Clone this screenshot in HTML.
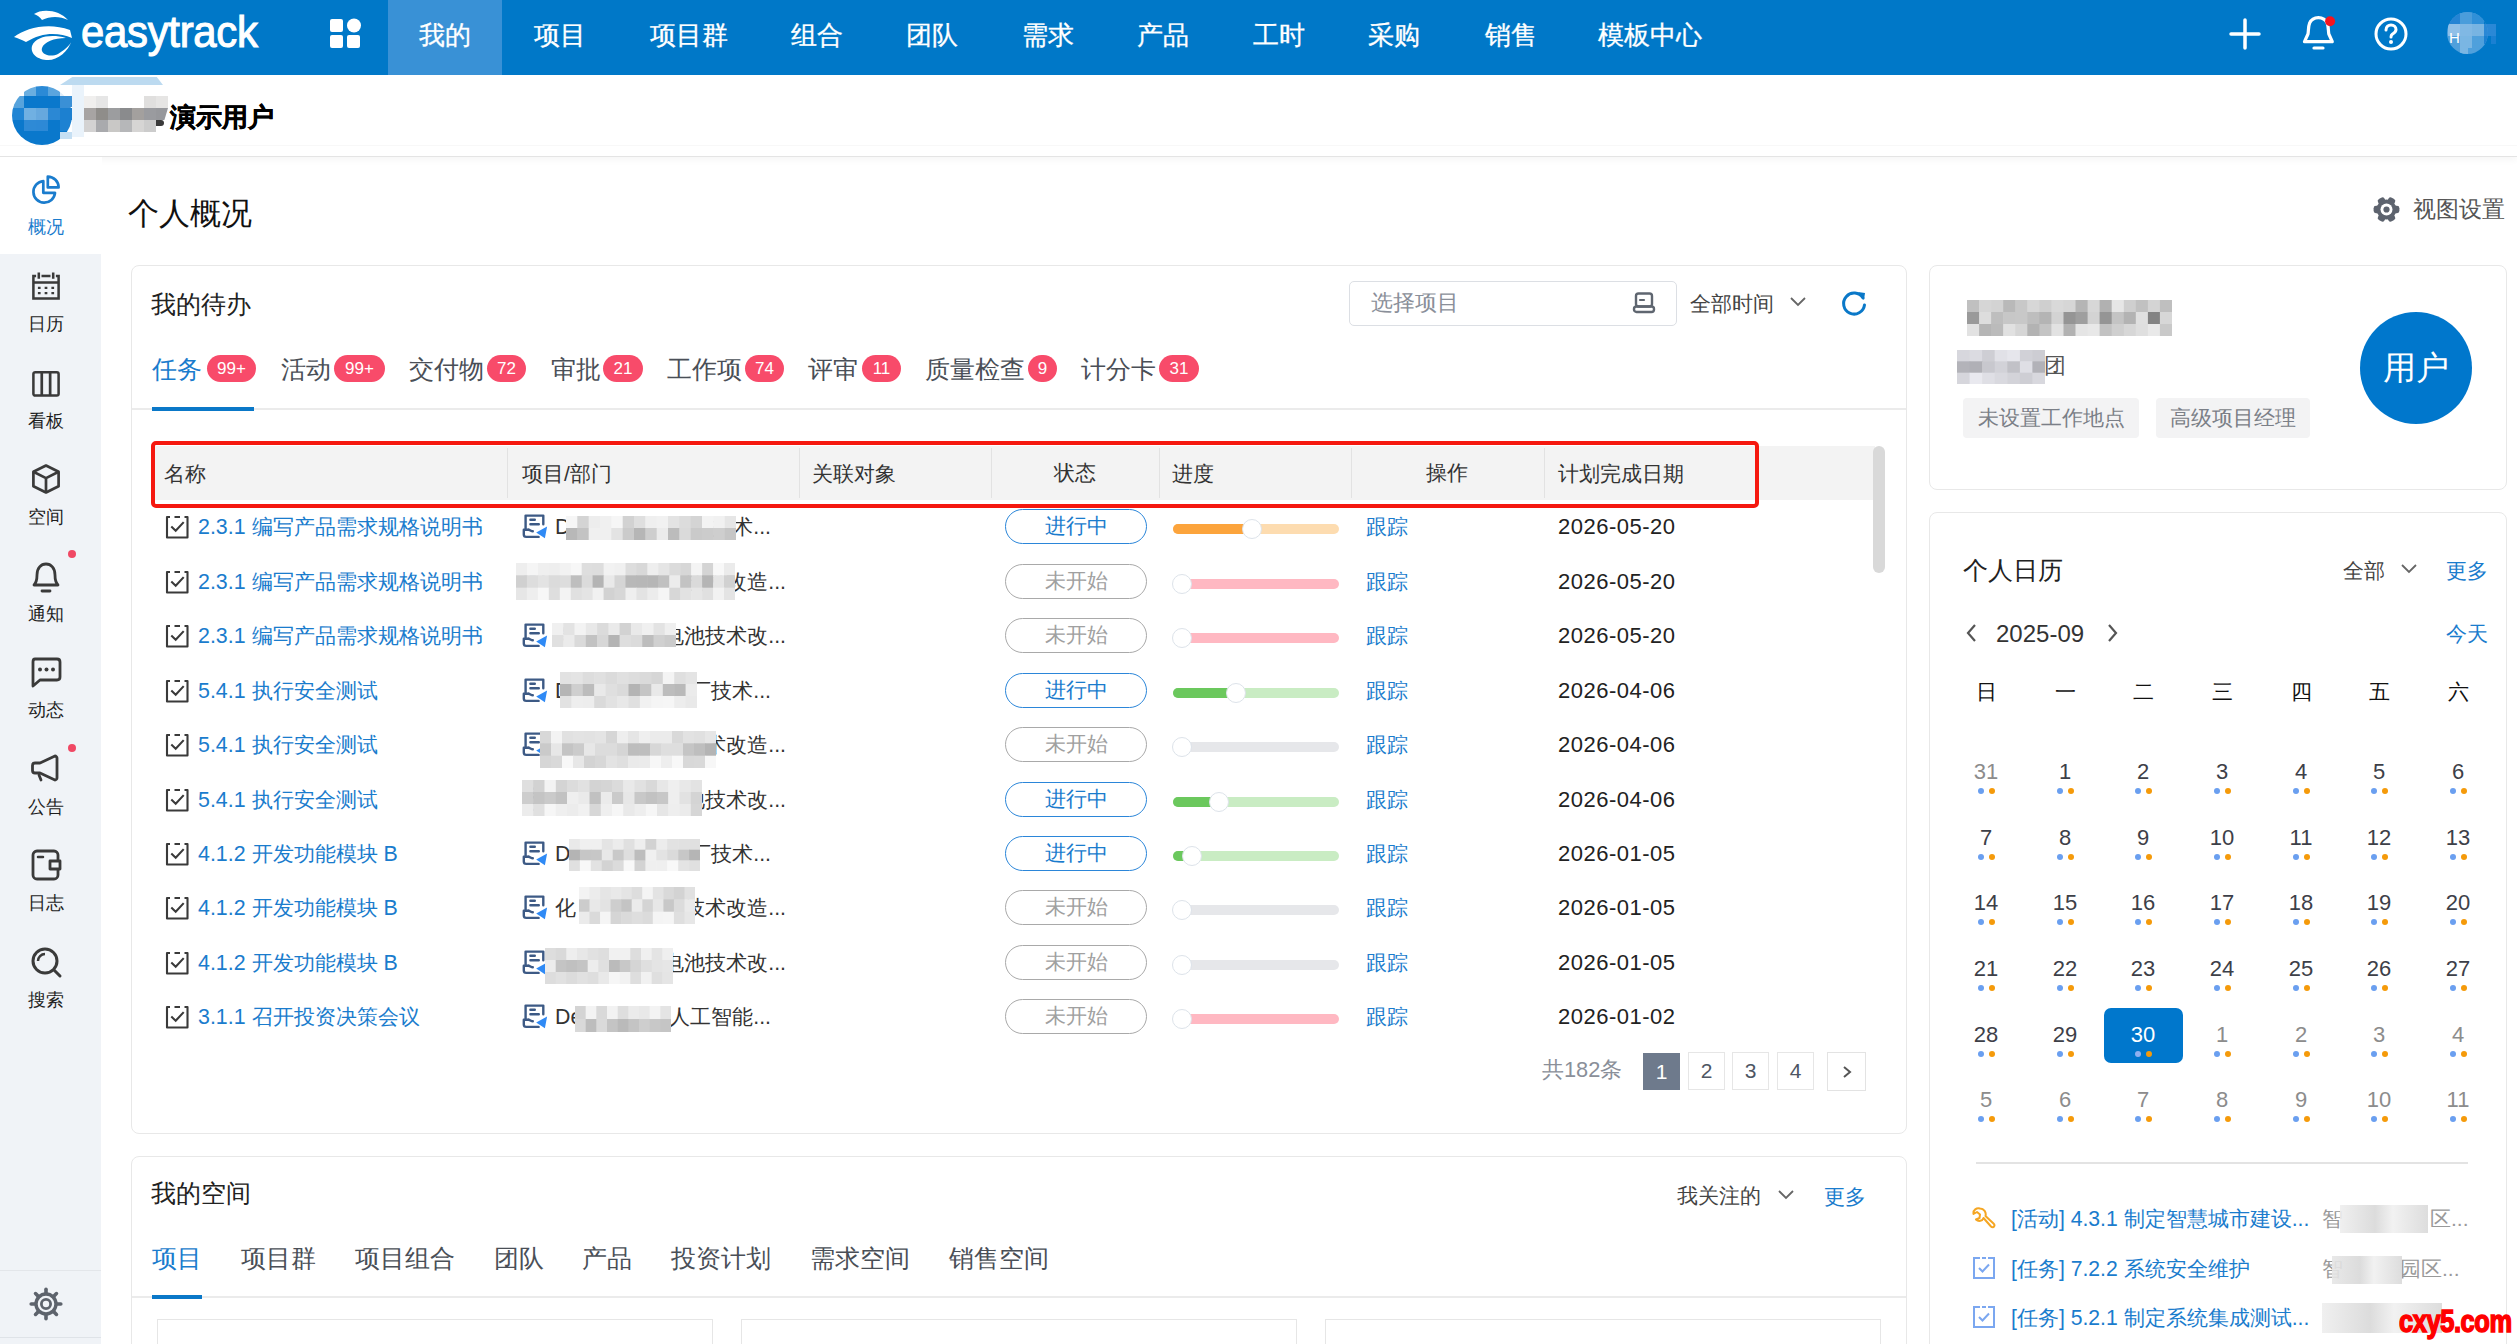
<!DOCTYPE html>
<html><head><meta charset="utf-8">
<style>
*{margin:0;padding:0;box-sizing:border-box}
html,body{width:2517px;height:1344px;overflow:hidden;background:#fff;font-family:"Liberation Sans",sans-serif;color:#333}
.a{position:absolute}
.nav{left:0;top:0;width:2517px;height:75px;background:#0078c8}
.nav .it{position:absolute;top:0;height:75px;line-height:70px;color:#fff;font-size:25.5px;text-align:center;-webkit-text-stroke:0.3px #fff}
.nav .act{background:#3991d6}
.bar2{left:0;top:75px;width:2517px;height:82px;background:linear-gradient(#fff 0,#fff 70px,#f8f8f8 70px,#f8f8f8 71px,#fff 71px,#fff 81px,#e4e4e4 81px,#e4e4e4 82px);box-shadow:0 4px 6px rgba(0,0,0,0.03)}
.side{left:0;top:157px;width:101px;height:1187px;background:#f0f3f7}
.side .s{position:absolute;left:0;width:92px;text-align:center;font-size:18px;color:#333}
.card{position:absolute;border:1px solid #e8e8e8;border-radius:8px;background:#fff}
</style></head><body>
<!-- top nav -->
<div class="a nav">
  
  <svg class="a" style="left:12px;top:8px" width="64" height="52" viewBox="0 0 64 52">
    <path d="M22 6 C30 0 48 2 56 12 C48 8 38 8 30 12 C28 9 25 7 22 6 Z" fill="#fff"/>
    <path d="M2 29 C14 20 36 14 58 22 L60 30 C46 24 30 24 14 34 C10 32 6 30 2 29 Z" fill="#fff"/>
    <path d="M60 32 C56 44 46 52 36 52 C26 52 18 46 20 38 C24 28 40 26 54 30 C42 30 32 34 30 40 C28 46 38 50 46 46 C52 42 58 38 60 32 Z" fill="#fff"/>
  </svg>
  <div class="a" style="left:81px;top:2px;height:60px;line-height:60px;font-size:45px;color:#fff;-webkit-text-stroke:1.1px #fff;letter-spacing:-0.3px;transform:scaleX(0.93);transform-origin:left;font-family:'Liberation Sans',sans-serif">easytrack</div>
  <svg class="a" style="left:330px;top:18px" width="31" height="30" viewBox="0 0 31 30">
    <rect x="0" y="1" width="13" height="13" rx="2" fill="#fff"/>
    <circle cx="24" cy="7.5" r="7" fill="#fff"/>
    <rect x="0" y="17" width="13" height="13" rx="2" fill="#fff"/>
    <rect x="17" y="17" width="13" height="13" rx="2" fill="#fff"/>
  </svg>
  <svg class="a" style="left:2228px;top:17px" width="34" height="34" viewBox="0 0 34 34">
    <path d="M17 3 V31 M3 17 H31" stroke="#fff" stroke-width="3.5" stroke-linecap="round"/>
  </svg>
  <svg class="a" style="left:2300px;top:14px" width="40" height="40" viewBox="0 0 40 40"><path d="M4.5 27.7 L8 20 C8.6 17 8.2 12.5 9.6 9.2 C11.2 5.6 14.6 3.6 18.4 3.6 C22.2 3.6 25.6 5.6 27.2 9.2 C28.6 12.5 28.2 17 28.8 20 L32.3 27.7 Z" stroke="#fff" stroke-width="3.2" fill="none" stroke-linejoin="round"/><path d="M14 34 H23" stroke="#fff" stroke-width="3.2" stroke-linecap="round"/><circle cx="30.1" cy="7.3" r="5" fill="#f5141e"/></svg>
  <svg class="a" style="left:2373px;top:16px" width="36" height="36" viewBox="0 0 36 36">
    <circle cx="18" cy="18" r="15" stroke="#fff" stroke-width="3" fill="none"/>
    <path d="M13 14 C13 10.5 15.5 9 18 9 C21 9 23 11 23 13.5 C23 16 21 17 19.5 18 C18.5 18.7 18 19.5 18 21" stroke="#fff" stroke-width="3" fill="none" stroke-linecap="round"/>
    <circle cx="18" cy="26" r="2" fill="#fff"/>
  </svg>
  <div class="a" style="left:2484px;top:24px;width:12px;height:12px;background:#2a88d6"></div>
  <div class="a" style="left:2491px;top:36px;width:5px;height:8px;background:#1a80d2"></div>
  <div class="a" style="left:2447px;top:12px;width:41px;height:42px;border-radius:50%;background:#4fa0dc;overflow:hidden">
    <div class="a" style="left:0;top:0;width:13px;height:12px;background:#2584d4"></div>
    <div class="a" style="left:13px;top:0;width:12px;height:12px;background:#4a9ddb"></div>
    <div class="a" style="left:25px;top:0;width:12px;height:12px;background:#3090d8"></div>
    <div class="a" style="left:37px;top:0;width:4px;height:12px;background:#0078c8"></div>
    <div class="a" style="left:1px;top:12px;width:12px;height:12px;background:#90c0e8"></div>
    <div class="a" style="left:13px;top:12px;width:12px;height:12px;background:#80b8e4"></div>
    <div class="a" style="left:25px;top:12px;width:12px;height:12px;background:#78b4e2"></div>
    <div class="a" style="left:37px;top:12px;width:4px;height:12px;background:#2a88d6"></div>
    <div class="a" style="left:13px;top:24px;width:12px;height:12px;background:#7ab6e3"></div>
    <div class="a" style="left:13px;top:36px;width:8px;height:6px;background:#7ab6e3"></div>
    <div class="a" style="left:37px;top:24px;width:4px;height:8px;background:#1a80d2"></div>
    <div class="a" style="left:2px;top:14px;font-size:15px;line-height:24px;color:#fff;font-family:'Liberation Sans',sans-serif">H</div>
  </div>
  <div class="it act" style="left:388px;width:114px">我的</div>
  <div class="it" style="left:503px;width:114px">项目</div>
  <div class="it" style="left:617px;width:144px">项目群</div>
  <div class="it" style="left:760px;width:114px">组合</div>
  <div class="it" style="left:875px;width:114px">团队</div>
  <div class="it" style="left:991px;width:114px">需求</div>
  <div class="it" style="left:1106px;width:114px">产品</div>
  <div class="it" style="left:1222px;width:114px">工时</div>
  <div class="it" style="left:1337px;width:114px">采购</div>
  <div class="it" style="left:1454px;width:114px">销售</div>
  <div class="it" style="left:1580px;width:140px">模板中心</div>
</div>
<div class="a bar2">
  <div class="a" style="left:60px;top:2px;width:103px;height:8px;background:#bcdaf0;clip-path:polygon(12% 0,94% 0,100% 100%,0 100%)"></div>
  <div class="a" style="left:12px;top:11px;width:60px;height:59px;border-radius:50%;overflow:hidden"><div class="a" style="left:0px;top:0px;width:12px;height:10px;background:#ffffff"></div><div class="a" style="left:12px;top:0px;width:12px;height:10px;background:#6aaee0"></div><div class="a" style="left:24px;top:0px;width:12px;height:10px;background:#2b8ad6"></div><div class="a" style="left:36px;top:0px;width:12px;height:10px;background:#5aa5de"></div><div class="a" style="left:48px;top:0px;width:12px;height:10px;background:#e0edf8"></div><div class="a" style="left:0px;top:10px;width:12px;height:12px;background:#57a3dc"></div><div class="a" style="left:12px;top:10px;width:12px;height:12px;background:#0a78cc"></div><div class="a" style="left:24px;top:10px;width:12px;height:12px;background:#0a78cc"></div><div class="a" style="left:36px;top:10px;width:12px;height:12px;background:#0a78cc"></div><div class="a" style="left:48px;top:10px;width:12px;height:12px;background:#3a90d6"></div><div class="a" style="left:0px;top:22px;width:12px;height:12px;background:#2185d4"></div><div class="a" style="left:12px;top:22px;width:12px;height:12px;background:#70b0e2"></div><div class="a" style="left:24px;top:22px;width:12px;height:12px;background:#66a8de"></div><div class="a" style="left:36px;top:22px;width:12px;height:12px;background:#2b88d4"></div><div class="a" style="left:48px;top:22px;width:12px;height:12px;background:#1c80d0"></div><div class="a" style="left:0px;top:34px;width:12px;height:11px;background:#0a78cc"></div><div class="a" style="left:12px;top:34px;width:12px;height:11px;background:#2e8ad6"></div><div class="a" style="left:24px;top:34px;width:12px;height:11px;background:#2d89d6"></div><div class="a" style="left:36px;top:34px;width:12px;height:11px;background:#0a78cc"></div><div class="a" style="left:48px;top:34px;width:12px;height:11px;background:#1e82d2"></div><div class="a" style="left:0px;top:45px;width:12px;height:14px;background:#0a78cc"></div><div class="a" style="left:12px;top:45px;width:12px;height:14px;background:#0a78cc"></div><div class="a" style="left:24px;top:45px;width:12px;height:14px;background:#0a78cc"></div><div class="a" style="left:36px;top:45px;width:12px;height:14px;background:#0a78cc"></div><div class="a" style="left:48px;top:45px;width:12px;height:14px;background:#0a78cc"></div></div>
  <div class="a" style="left:60px;top:10px;width:12px;height:62px;background:#0a78cc;border-radius:0 30px 30px 0;display:none"></div>
  <div class="a" style="left:60px;top:21px;width:12px;height:11px;background:#3a90d6"></div>
  <div class="a" style="left:60px;top:33px;width:12px;height:12px;background:#1c80d0"></div>
  <div class="a" style="left:72px;top:10px;width:12px;height:52px;background:#eaf3fb"></div>
  <div class="a" style="left:60px;top:57px;width:12px;height:7px;background:#c5dff3"></div>
  <div class="a" style="left:84px;top:21px;width:12px;height:12px;background:#f0efee"></div>
  <div class="a" style="left:96px;top:21px;width:12px;height:12px;background:#e6e6e6"></div>
  <div class="a" style="left:108px;top:21px;width:12px;height:12px;background:#ffffff"></div>
  <div class="a" style="left:120px;top:21px;width:12px;height:12px;background:#ffffff"></div>
  <div class="a" style="left:132px;top:21px;width:12px;height:12px;background:#ffffff"></div>
  <div class="a" style="left:144px;top:21px;width:12px;height:12px;background:#e0dfde"></div>
  <div class="a" style="left:84px;top:33px;width:12px;height:12px;background:#a7a4a3"></div>
  <div class="a" style="left:96px;top:33px;width:12px;height:12px;background:#8f8d8a"></div>
  <div class="a" style="left:108px;top:33px;width:12px;height:12px;background:#9c9d9f"></div>
  <div class="a" style="left:120px;top:33px;width:12px;height:12px;background:#8a8b8d"></div>
  <div class="a" style="left:132px;top:33px;width:12px;height:12px;background:#a3a09e"></div>
  <div class="a" style="left:144px;top:33px;width:12px;height:12px;background:#9a9b9f"></div>
  <div class="a" style="left:84px;top:45px;width:12px;height:12px;background:#d3d2d2"></div>
  <div class="a" style="left:96px;top:45px;width:12px;height:12px;background:#a9aaad"></div>
  <div class="a" style="left:108px;top:45px;width:12px;height:12px;background:#c9c8c6"></div>
  <div class="a" style="left:120px;top:45px;width:12px;height:12px;background:#b6b7b9"></div>
  <div class="a" style="left:132px;top:45px;width:12px;height:12px;background:#d6d5d4"></div>
  <div class="a" style="left:144px;top:45px;width:12px;height:12px;background:#cccccc"></div>
  <div class="a" style="left:156px;top:21px;width:12px;height:12px;background:#e6e5e4"></div>
  <div class="a" style="left:156px;top:33px;width:12px;height:12px;background:#97989c;clip-path:polygon(0 0,100% 0,70% 100%,0 100%)"></div>
  <div class="a" style="left:156px;top:45px;width:8px;height:6px;background:#3a3a3a;border-radius:0 6px 6px 0"></div>
  <div class="a" style="left:170px;top:21px;line-height:42px;font-size:26px;font-weight:bold;color:#000;-webkit-text-stroke:0.4px #000">演示用户</div>
</div>
<div class="a side">
  <div class="a" style="left:0;top:0;width:101px;height:97px;background:#fff"></div>
  <div class="s" style="top:16px"><svg width="36" height="36" viewBox="0 0 40 40" style="display:block;margin:0 auto"><path d="M17 9 A12 12 0 1 0 30 22 L17 22 Z" stroke="#1a7ccd" stroke-width="3" fill="none" stroke-linejoin="round"/><path d="M22 4 A12 12 0 0 1 34 16 L22 16 Z" stroke="#1a7ccd" stroke-width="3" fill="none" stroke-linejoin="round"/></svg><div style="margin-top:6px;color:#1a7ccd">概况</div></div>
  <div class="s" style="top:111px"><svg width="36" height="36" viewBox="0 0 40 40" style="display:block;margin:0 auto"><path d="M9 9 H6 V34 H34 V9 H31 M15 9 H25" stroke="#3a3a3a" stroke-width="2.8" fill="none"/><path d="M12 5 V12 M28 5 V12 M6 16 H34" stroke="#3a3a3a" stroke-width="2.8"/><path d="M11 22h3M18.5 22h3M26 22h3M11 28h3M18.5 28h3M26 28h3" stroke="#3a3a3a" stroke-width="2.5"/></svg><div style="margin-top:8px;color:#1e1e1e">日历</div></div>
  <div class="s" style="top:208px"><svg width="36" height="36" viewBox="0 0 40 40" style="display:block;margin:0 auto"><rect x="6" y="8" width="28" height="26" rx="2" stroke="#3a3a3a" stroke-width="2.8" fill="none"/><path d="M15.3 8 V34 M24.6 8 V34" stroke="#3a3a3a" stroke-width="3"/></svg><div style="margin-top:8px;color:#1e1e1e">看板</div></div>
  <div class="s" style="top:304px"><svg width="36" height="36" viewBox="0 0 40 40" style="display:block;margin:0 auto"><path d="M20 5 L34 12 V28 L20 35 L6 28 V12 Z" stroke="#3a3a3a" stroke-width="3" fill="none" stroke-linejoin="round"/><path d="M6 12 L20 19 L34 12 M20 19 V35" stroke="#3a3a3a" stroke-width="3" fill="none" stroke-linejoin="round"/></svg><div style="margin-top:8px;color:#1e1e1e">空间</div></div>
  <div class="s" style="top:401px"><svg width="36" height="36" viewBox="2 2 36 36" style="display:block;margin:0 auto"><path d="M8 29 C10 27 11 25 11 19 C11 12 15 8 20 8 C25 8 29 12 29 19 C29 25 30 27 32 29 Z" stroke="#3a3a3a" stroke-width="2.8" fill="none" stroke-linejoin="round"/><path d="M16 35 H24" stroke="#3a3a3a" stroke-width="2.8" stroke-linecap="round"/></svg><div style="margin-top:8px;color:#1e1e1e">通知</div></div>
  <div class="s" style="top:497px"><svg width="36" height="36" viewBox="2 2 36 36" style="display:block;margin:0 auto"><path d="M9 7 H31 C33 7 34 8 34 10 V25 C34 27 33 28 31 28 H14 L7 34 V10 C7 8 8 7 9 7 Z" stroke="#3a3a3a" stroke-width="2.8" fill="none" stroke-linejoin="round"/><circle cx="14" cy="17.5" r="2" fill="#3a3a3a"/><circle cx="20.5" cy="17.5" r="2" fill="#3a3a3a"/><circle cx="27" cy="17.5" r="2" fill="#3a3a3a"/></svg><div style="margin-top:8px;color:#1e1e1e">动态</div></div>
  <div class="s" style="top:594px"><svg width="36" height="36" viewBox="2 2 36 36" style="display:block;margin:0 auto"><path d="M9 14 H14 L29 7 C30 7 31 8 31 9 V29 C31 30 30 31 29 31 L14 24 H9 C7.5 24 6.5 23 6.5 21.5 V16.5 C6.5 15 7.5 14 9 14 Z" stroke="#3a3a3a" stroke-width="2.8" fill="none" stroke-linejoin="round"/><path d="M13 26 L15 31" stroke="#3a3a3a" stroke-width="2.8" stroke-linecap="round"/></svg><div style="margin-top:8px;color:#1e1e1e">公告</div></div>
  <div class="s" style="top:690px"><svg width="36" height="36" viewBox="2 2 36 36" style="display:block;margin:0 auto"><rect x="7" y="6" width="25" height="28" rx="4" stroke="#3a3a3a" stroke-width="2.8" fill="none"/><path d="M34 16 H24 V24 H34 Z" stroke="#3a3a3a" stroke-width="2.8" fill="#f0f3f7" stroke-linejoin="round"/><path d="M12 12 H17" stroke="#3a3a3a" stroke-width="2.5" stroke-linecap="round"/></svg><div style="margin-top:8px;color:#1e1e1e">日志</div></div>
  <div class="s" style="top:787px"><svg width="36" height="36" viewBox="2 2 36 36" style="display:block;margin:0 auto"><circle cx="19" cy="19" r="12" stroke="#3a3a3a" stroke-width="3" fill="none"/><path d="M28 28 L34 34" stroke="#3a3a3a" stroke-width="3" stroke-linecap="round"/><path d="M12 19 A7 7 0 0 1 19 12" stroke="#3a3a3a" stroke-width="2.5" fill="none"/></svg><div style="margin-top:8px;color:#1e1e1e">搜索</div></div>
  <div class="a" style="left:101px;top:0;width:1px;height:1187px;background:#fff"></div>
  <div class="a" style="left:0;top:1113px;width:101px;height:1px;background:#e3e6ea"></div>
  <svg class="a" style="left:28px;top:1129px" width="36" height="36" viewBox="0 0 36 36"><g stroke="#5d636c" stroke-width="3.6" stroke-linecap="round"><line x1="18" y1="3.2" x2="18" y2="7" transform="rotate(0 18 18)"/><line x1="18" y1="3.2" x2="18" y2="7" transform="rotate(45 18 18)"/><line x1="18" y1="3.2" x2="18" y2="7" transform="rotate(90 18 18)"/><line x1="18" y1="3.2" x2="18" y2="7" transform="rotate(135 18 18)"/><line x1="18" y1="3.2" x2="18" y2="7" transform="rotate(180 18 18)"/><line x1="18" y1="3.2" x2="18" y2="7" transform="rotate(225 18 18)"/><line x1="18" y1="3.2" x2="18" y2="7" transform="rotate(270 18 18)"/><line x1="18" y1="3.2" x2="18" y2="7" transform="rotate(315 18 18)"/></g><circle cx="18" cy="18" r="10" stroke="#5d636c" stroke-width="3.4" fill="none"/><circle cx="18" cy="18" r="4.6" stroke="#5d636c" stroke-width="2.8" fill="none"/></svg>
  <div class="a" style="left:0;top:1180px;width:101px;height:1px;background:#dfe3e8"></div>
  <div class="a" style="left:68px;top:393px;width:8px;height:8px;border-radius:50%;background:#f04864"></div>
  <div class="a" style="left:68px;top:587px;width:8px;height:8px;border-radius:50%;background:#f04864"></div>
</div>
<div class="a" style="left:128px;top:192px;font-size:31.4px;line-height:44px;color:#111">个人概况</div>
<svg class="a" style="left:2373px;top:196px" width="27" height="27" viewBox="0 0 27 27"><rect x="9.8" y="0.6" width="7.4" height="7" rx="2.4" transform="rotate(30 13.5 13.5)" fill="#5d636e"/><rect x="9.8" y="0.6" width="7.4" height="7" rx="2.4" transform="rotate(90 13.5 13.5)" fill="#5d636e"/><rect x="9.8" y="0.6" width="7.4" height="7" rx="2.4" transform="rotate(150 13.5 13.5)" fill="#5d636e"/><rect x="9.8" y="0.6" width="7.4" height="7" rx="2.4" transform="rotate(210 13.5 13.5)" fill="#5d636e"/><rect x="9.8" y="0.6" width="7.4" height="7" rx="2.4" transform="rotate(270 13.5 13.5)" fill="#5d636e"/><rect x="9.8" y="0.6" width="7.4" height="7" rx="2.4" transform="rotate(330 13.5 13.5)" fill="#5d636e"/><circle cx="13.5" cy="13.5" r="10" fill="#5d636e"/><circle cx="13.5" cy="13.5" r="6" fill="#fff"/><circle cx="13.5" cy="13.5" r="3.1" fill="#5d636e"/></svg>
<div class="a" style="left:2413px;top:192px;font-size:23.2px;line-height:34px;color:#555">视图设置</div>
<div class="card" style="left:131px;top:265px;width:1776px;height:869px"></div>
<div class="a" style="left:151px;top:287px;font-size:25px;line-height:35px;color:#222;white-space:nowrap;">我的待办</div>
<div class="a" style="left:1349px;top:281px;width:328px;height:45px;border:1px solid #dcdfe4;border-radius:5px"></div>
<div class="a" style="left:1371px;top:288px;font-size:22px;line-height:30px;color:#8a8f99;white-space:nowrap;">选择项目</div>
<svg class="a" style="left:1632px;top:291px" width="24" height="24" viewBox="0 0 24 24"><rect x="4" y="2.5" width="16" height="13" rx="2.5" stroke="#5f6670" stroke-width="2.4" fill="none"/><path d="M8 9 H12" stroke="#5f6670" stroke-width="2.2" stroke-linecap="round"/><rect x="2" y="15.5" width="20" height="5.5" rx="2.5" stroke="#5f6670" stroke-width="2.4" fill="none"/></svg>
<div class="a" style="left:1690px;top:289px;font-size:21px;line-height:29px;color:#444;white-space:nowrap;">全部时间</div>
<svg class="a" style="left:1789px;top:296px" width="18" height="12" viewBox="0 0 18 12"><path d="M2 2 L9 9 L16 2" stroke="#666" stroke-width="1.8" fill="none"/></svg>
<svg class="a" style="left:1840px;top:290px" width="28" height="28" viewBox="0 0 28 28"><path d="M23 8 A10.5 10.5 0 1 0 24.5 15" stroke="#0a78c8" stroke-width="3" fill="none" stroke-linecap="round"/><path d="M18 2 L25 3 L24 10 Z" fill="#0a78c8"/></svg>
<div class="a" style="left:152px;top:352px;font-size:25px;line-height:35px;color:#1a7ccd;white-space:nowrap;">任务</div>
<div class="a" style="left:207px;top:355px;width:49px;height:27px;border-radius:14px;background:#f84b6a;color:#fff;font-size:17px;line-height:27px;text-align:center">99+</div>
<div class="a" style="left:281px;top:352px;font-size:25px;line-height:35px;color:#4a4f57;white-space:nowrap;">活动</div>
<div class="a" style="left:334px;top:355px;width:51px;height:27px;border-radius:14px;background:#f84b6a;color:#fff;font-size:17px;line-height:27px;text-align:center">99+</div>
<div class="a" style="left:409px;top:352px;font-size:25px;line-height:35px;color:#4a4f57;white-space:nowrap;">交付物</div>
<div class="a" style="left:487px;top:355px;width:39px;height:27px;border-radius:14px;background:#f84b6a;color:#fff;font-size:17px;line-height:27px;text-align:center">72</div>
<div class="a" style="left:551px;top:352px;font-size:25px;line-height:35px;color:#4a4f57;white-space:nowrap;">审批</div>
<div class="a" style="left:603px;top:355px;width:40px;height:27px;border-radius:14px;background:#f84b6a;color:#fff;font-size:17px;line-height:27px;text-align:center">21</div>
<div class="a" style="left:667px;top:352px;font-size:25px;line-height:35px;color:#4a4f57;white-space:nowrap;">工作项</div>
<div class="a" style="left:745px;top:355px;width:39px;height:27px;border-radius:14px;background:#f84b6a;color:#fff;font-size:17px;line-height:27px;text-align:center">74</div>
<div class="a" style="left:808px;top:352px;font-size:25px;line-height:35px;color:#4a4f57;white-space:nowrap;">评审</div>
<div class="a" style="left:862px;top:355px;width:39px;height:27px;border-radius:14px;background:#f84b6a;color:#fff;font-size:17px;line-height:27px;text-align:center">11</div>
<div class="a" style="left:925px;top:352px;font-size:25px;line-height:35px;color:#4a4f57;white-space:nowrap;">质量检查</div>
<div class="a" style="left:1028px;top:355px;width:29px;height:27px;border-radius:14px;background:#f84b6a;color:#fff;font-size:17px;line-height:27px;text-align:center">9</div>
<div class="a" style="left:1081px;top:352px;font-size:25px;line-height:35px;color:#4a4f57;white-space:nowrap;">计分卡</div>
<div class="a" style="left:1159px;top:355px;width:40px;height:27px;border-radius:14px;background:#f84b6a;color:#fff;font-size:17px;line-height:27px;text-align:center">31</div>
<div class="a" style="left:132px;top:408px;width:1774px;height:2px;background:#ebebeb"></div>
<div class="a" style="left:152px;top:407px;width:102px;height:4px;background:#0a78c8"></div>
<div class="a" style="left:153px;top:446px;width:1722px;height:54px;background:#f3f3f3"></div>
<div class="a" style="left:507px;top:448px;width:1px;height:50px;background:#e2e2e2"></div>
<div class="a" style="left:799px;top:448px;width:1px;height:50px;background:#e2e2e2"></div>
<div class="a" style="left:991px;top:448px;width:1px;height:50px;background:#e2e2e2"></div>
<div class="a" style="left:1159px;top:448px;width:1px;height:50px;background:#e2e2e2"></div>
<div class="a" style="left:1351px;top:448px;width:1px;height:50px;background:#e2e2e2"></div>
<div class="a" style="left:1544px;top:448px;width:1px;height:50px;background:#e2e2e2"></div>
<div class="a" style="left:164px;top:459px;font-size:21px;line-height:29px;color:#333;white-space:nowrap;">名称</div>
<div class="a" style="left:522px;top:459px;font-size:21px;line-height:29px;color:#333;white-space:nowrap;">项目/部门</div>
<div class="a" style="left:812px;top:459px;font-size:21px;line-height:29px;color:#333;white-space:nowrap;">关联对象</div>
<div class="a" style="left:975px;top:457px;width:200px;text-align:center;font-size:21px;line-height:32px;color:#333">状态</div>
<div class="a" style="left:1172px;top:459px;font-size:21px;line-height:29px;color:#333;white-space:nowrap;">进度</div>
<div class="a" style="left:1347px;top:457px;width:200px;text-align:center;font-size:21px;line-height:32px;color:#333">操作</div>
<div class="a" style="left:1558px;top:459px;font-size:21px;line-height:29px;color:#333;white-space:nowrap;">计划完成日期</div>
<div class="a" style="left:151px;top:441px;width:1608px;height:67px;border:4px solid #f5180f;border-radius:5px"></div>
<div class="a" style="left:1873px;top:446px;width:12px;height:127px;border-radius:6px;background:#d9d9d9"></div>
<svg class="a" style="left:164px;top:514px" width="26" height="26" viewBox="0 0 26 26"><path d="M6 3 H3 V23.5 H23.5 V3 H20.5 M10.5 3 H16" stroke="#3a3a3a" stroke-width="2.1" fill="none" stroke-linejoin="round"/><path d="M7.3 12.6 L11.7 16.7 L19.7 8.1" stroke="#3a3a3a" stroke-width="2.1" fill="none"/></svg>
<div class="a" style="left:198px;top:513px;font-size:21.4px;line-height:29px;color:#1a7ccd;white-space:nowrap;">2.3.1 编写产品需求规格说明书</div>
<svg class="a" style="left:521px;top:514px" width="28" height="26" viewBox="0 0 28 26"><g stroke="#3d5a85" stroke-width="2.4" fill="none" stroke-linecap="round" stroke-linejoin="round"><path d="M4.6 14.8 V1.6 H22.3 V10.2"/><path d="M9.4 5.8 H13.8 M9.4 10.2 H17.8"/><path d="M7.5 15.8 H2.8 V20.5 C2.8 21.9 3.8 22.9 5.2 22.9 H17.6"/><path d="M7.5 15.8 C9 15.8 10 17.2 11.8 17.2"/></g><path d="M15.2 18.5 L26.1 12.4 L23.9 24.2 Z" fill="#2f8af5"/></svg>
<div class="a" style="left:555px;top:513px;font-size:21.3px;line-height:29px;color:#333;white-space:nowrap;">D</div>
<div class="a" style="left:471px;top:512px;width:300px;text-align:right;font-size:21.3px;line-height:30px;color:#333;white-space:nowrap">厂技术...</div>
<svg class="a" style="left:566px;top:516px" width="170" height="24"><rect x="0.0" y="0.0" width="11.9" height="12.6" fill="rgb(246,246,246)"/><rect x="11.3" y="0.0" width="11.9" height="12.6" fill="rgb(212,212,212)"/><rect x="22.7" y="0.0" width="11.9" height="12.6" fill="rgb(237,237,237)"/><rect x="34.0" y="0.0" width="11.9" height="12.6" fill="rgb(240,240,240)"/><rect x="45.3" y="0.0" width="11.9" height="12.6" fill="rgb(246,246,246)"/><rect x="56.7" y="0.0" width="11.9" height="12.6" fill="rgb(210,210,210)"/><rect x="68.0" y="0.0" width="11.9" height="12.6" fill="rgb(223,223,223)"/><rect x="79.3" y="0.0" width="11.9" height="12.6" fill="rgb(239,239,239)"/><rect x="90.7" y="0.0" width="11.9" height="12.6" fill="rgb(241,241,241)"/><rect x="102.0" y="0.0" width="11.9" height="12.6" fill="rgb(227,227,227)"/><rect x="113.3" y="0.0" width="11.9" height="12.6" fill="rgb(220,220,220)"/><rect x="124.7" y="0.0" width="11.9" height="12.6" fill="rgb(212,212,212)"/><rect x="136.0" y="0.0" width="11.9" height="12.6" fill="rgb(243,243,243)"/><rect x="147.3" y="0.0" width="11.9" height="12.6" fill="rgb(241,241,241)"/><rect x="158.7" y="0.0" width="11.9" height="12.6" fill="rgb(230,230,230)"/><rect x="0.0" y="12.0" width="11.9" height="12.6" fill="rgb(184,184,184)"/><rect x="11.3" y="12.0" width="11.9" height="12.6" fill="rgb(195,195,195)"/><rect x="22.7" y="12.0" width="11.9" height="12.6" fill="rgb(240,240,240)"/><rect x="34.0" y="12.0" width="11.9" height="12.6" fill="rgb(240,240,240)"/><rect x="45.3" y="12.0" width="11.9" height="12.6" fill="rgb(227,227,227)"/><rect x="56.7" y="12.0" width="11.9" height="12.6" fill="rgb(203,203,203)"/><rect x="68.0" y="12.0" width="11.9" height="12.6" fill="rgb(182,182,182)"/><rect x="79.3" y="12.0" width="11.9" height="12.6" fill="rgb(206,206,206)"/><rect x="90.7" y="12.0" width="11.9" height="12.6" fill="rgb(235,235,235)"/><rect x="102.0" y="12.0" width="11.9" height="12.6" fill="rgb(188,188,188)"/><rect x="113.3" y="12.0" width="11.9" height="12.6" fill="rgb(218,218,218)"/><rect x="124.7" y="12.0" width="11.9" height="12.6" fill="rgb(202,202,202)"/><rect x="136.0" y="12.0" width="11.9" height="12.6" fill="rgb(204,204,204)"/><rect x="147.3" y="12.0" width="11.9" height="12.6" fill="rgb(206,206,206)"/><rect x="158.7" y="12.0" width="11.9" height="12.6" fill="rgb(198,198,198)"/></svg>
<div class="a" style="left:1005px;top:509px;width:142px;height:35px;border:1.5px solid #2b86d9;border-radius:18px;text-align:center;font-size:21px;line-height:32px;color:#1a7ccd">进行中</div>
<div class="a" style="left:1173px;top:524px;width:166px;height:10px;border-radius:5px;background:#fddcb0"></div>
<div class="a" style="left:1173px;top:524px;width:79px;height:10px;border-radius:5px;background:#fca43c"></div>
<div class="a" style="left:1242px;top:519px;width:20px;height:20px;border-radius:50%;background:#fff;border:1px solid #dde3ea"></div>
<div class="a" style="left:1366px;top:513px;font-size:21.3px;line-height:29px;color:#1a7ccd;white-space:nowrap;">跟踪</div>
<div class="a" style="left:1558px;top:512px;font-size:22px;line-height:30px;color:#222;white-space:nowrap;letter-spacing:0.5px">2026-05-20</div>
<svg class="a" style="left:164px;top:569px" width="26" height="26" viewBox="0 0 26 26"><path d="M6 3 H3 V23.5 H23.5 V3 H20.5 M10.5 3 H16" stroke="#3a3a3a" stroke-width="2.1" fill="none" stroke-linejoin="round"/><path d="M7.3 12.6 L11.7 16.7 L19.7 8.1" stroke="#3a3a3a" stroke-width="2.1" fill="none"/></svg>
<div class="a" style="left:198px;top:568px;font-size:21.4px;line-height:29px;color:#1a7ccd;white-space:nowrap;">2.3.1 编写产品需求规格说明书</div>
<svg class="a" style="left:521px;top:569px" width="28" height="26" viewBox="0 0 28 26"><g stroke="#3d5a85" stroke-width="2.4" fill="none" stroke-linecap="round" stroke-linejoin="round"><path d="M4.6 14.8 V1.6 H22.3 V10.2"/><path d="M9.4 5.8 H13.8 M9.4 10.2 H17.8"/><path d="M7.5 15.8 H2.8 V20.5 C2.8 21.9 3.8 22.9 5.2 22.9 H17.6"/><path d="M7.5 15.8 C9 15.8 10 17.2 11.8 17.2"/></g><path d="M15.2 18.5 L26.1 12.4 L23.9 24.2 Z" fill="#2f8af5"/></svg>
<div class="a" style="left:486px;top:567px;width:300px;text-align:right;font-size:21.3px;line-height:30px;color:#333;white-space:nowrap">技术改造...</div>
<svg class="a" style="left:516px;top:563px" width="219" height="37"><rect x="0.0" y="0.0" width="11.5" height="12.9" fill="rgb(238,238,238)"/><rect x="10.9" y="0.0" width="11.5" height="12.9" fill="rgb(245,245,245)"/><rect x="21.9" y="0.0" width="11.5" height="12.9" fill="rgb(239,239,239)"/><rect x="32.8" y="0.0" width="11.5" height="12.9" fill="rgb(238,238,238)"/><rect x="43.8" y="0.0" width="11.5" height="12.9" fill="rgb(242,242,242)"/><rect x="54.8" y="0.0" width="11.5" height="12.9" fill="rgb(247,247,247)"/><rect x="65.7" y="0.0" width="11.5" height="12.9" fill="rgb(222,222,222)"/><rect x="76.6" y="0.0" width="11.5" height="12.9" fill="rgb(221,221,221)"/><rect x="87.6" y="0.0" width="11.5" height="12.9" fill="rgb(242,242,242)"/><rect x="98.5" y="0.0" width="11.5" height="12.9" fill="rgb(240,240,240)"/><rect x="109.5" y="0.0" width="11.5" height="12.9" fill="rgb(221,221,221)"/><rect x="120.4" y="0.0" width="11.5" height="12.9" fill="rgb(216,216,216)"/><rect x="131.4" y="0.0" width="11.5" height="12.9" fill="rgb(238,238,238)"/><rect x="142.3" y="0.0" width="11.5" height="12.9" fill="rgb(229,229,229)"/><rect x="153.3" y="0.0" width="11.5" height="12.9" fill="rgb(219,219,219)"/><rect x="164.2" y="0.0" width="11.5" height="12.9" fill="rgb(215,215,215)"/><rect x="175.2" y="0.0" width="11.5" height="12.9" fill="rgb(244,244,244)"/><rect x="186.1" y="0.0" width="11.5" height="12.9" fill="rgb(212,212,212)"/><rect x="197.1" y="0.0" width="11.5" height="12.9" fill="rgb(248,248,248)"/><rect x="208.0" y="0.0" width="11.5" height="12.9" fill="rgb(235,235,235)"/><rect x="0.0" y="12.3" width="11.5" height="12.9" fill="rgb(208,208,208)"/><rect x="10.9" y="12.3" width="11.5" height="12.9" fill="rgb(221,221,221)"/><rect x="21.9" y="12.3" width="11.5" height="12.9" fill="rgb(227,227,227)"/><rect x="32.8" y="12.3" width="11.5" height="12.9" fill="rgb(219,219,219)"/><rect x="43.8" y="12.3" width="11.5" height="12.9" fill="rgb(221,221,221)"/><rect x="54.8" y="12.3" width="11.5" height="12.9" fill="rgb(190,190,190)"/><rect x="65.7" y="12.3" width="11.5" height="12.9" fill="rgb(219,219,219)"/><rect x="76.6" y="12.3" width="11.5" height="12.9" fill="rgb(180,180,180)"/><rect x="87.6" y="12.3" width="11.5" height="12.9" fill="rgb(233,233,233)"/><rect x="98.5" y="12.3" width="11.5" height="12.9" fill="rgb(213,213,213)"/><rect x="109.5" y="12.3" width="11.5" height="12.9" fill="rgb(184,184,184)"/><rect x="120.4" y="12.3" width="11.5" height="12.9" fill="rgb(183,183,183)"/><rect x="131.4" y="12.3" width="11.5" height="12.9" fill="rgb(182,182,182)"/><rect x="142.3" y="12.3" width="11.5" height="12.9" fill="rgb(192,192,192)"/><rect x="153.3" y="12.3" width="11.5" height="12.9" fill="rgb(236,236,236)"/><rect x="164.2" y="12.3" width="11.5" height="12.9" fill="rgb(195,195,195)"/><rect x="175.2" y="12.3" width="11.5" height="12.9" fill="rgb(218,218,218)"/><rect x="186.1" y="12.3" width="11.5" height="12.9" fill="rgb(181,181,181)"/><rect x="197.1" y="12.3" width="11.5" height="12.9" fill="rgb(229,229,229)"/><rect x="208.0" y="12.3" width="11.5" height="12.9" fill="rgb(209,209,209)"/><rect x="0.0" y="24.7" width="11.5" height="12.9" fill="rgb(230,230,230)"/><rect x="10.9" y="24.7" width="11.5" height="12.9" fill="rgb(238,238,238)"/><rect x="21.9" y="24.7" width="11.5" height="12.9" fill="rgb(247,247,247)"/><rect x="32.8" y="24.7" width="11.5" height="12.9" fill="rgb(222,222,222)"/><rect x="43.8" y="24.7" width="11.5" height="12.9" fill="rgb(243,243,243)"/><rect x="54.8" y="24.7" width="11.5" height="12.9" fill="rgb(224,224,224)"/><rect x="65.7" y="24.7" width="11.5" height="12.9" fill="rgb(228,228,228)"/><rect x="76.6" y="24.7" width="11.5" height="12.9" fill="rgb(241,241,241)"/><rect x="87.6" y="24.7" width="11.5" height="12.9" fill="rgb(210,210,210)"/><rect x="98.5" y="24.7" width="11.5" height="12.9" fill="rgb(215,215,215)"/><rect x="109.5" y="24.7" width="11.5" height="12.9" fill="rgb(239,239,239)"/><rect x="120.4" y="24.7" width="11.5" height="12.9" fill="rgb(227,227,227)"/><rect x="131.4" y="24.7" width="11.5" height="12.9" fill="rgb(236,236,236)"/><rect x="142.3" y="24.7" width="11.5" height="12.9" fill="rgb(245,245,245)"/><rect x="153.3" y="24.7" width="11.5" height="12.9" fill="rgb(215,215,215)"/><rect x="164.2" y="24.7" width="11.5" height="12.9" fill="rgb(226,226,226)"/><rect x="175.2" y="24.7" width="11.5" height="12.9" fill="rgb(230,230,230)"/><rect x="186.1" y="24.7" width="11.5" height="12.9" fill="rgb(224,224,224)"/><rect x="197.1" y="24.7" width="11.5" height="12.9" fill="rgb(242,242,242)"/><rect x="208.0" y="24.7" width="11.5" height="12.9" fill="rgb(228,228,228)"/></svg>
<div class="a" style="left:1005px;top:564px;width:142px;height:35px;border:1.5px solid #a9a9a9;border-radius:18px;text-align:center;font-size:21px;line-height:32px;color:#a0a0a0">未开始</div>
<div class="a" style="left:1173px;top:579px;width:166px;height:10px;border-radius:5px;background:#ffb8c2"></div>
<div class="a" style="left:1172px;top:574px;width:20px;height:20px;border-radius:50%;background:#fff;border:1px solid #dde3ea"></div>
<div class="a" style="left:1366px;top:568px;font-size:21.3px;line-height:29px;color:#1a7ccd;white-space:nowrap;">跟踪</div>
<div class="a" style="left:1558px;top:567px;font-size:22px;line-height:30px;color:#222;white-space:nowrap;letter-spacing:0.5px">2026-05-20</div>
<svg class="a" style="left:164px;top:623px" width="26" height="26" viewBox="0 0 26 26"><path d="M6 3 H3 V23.5 H23.5 V3 H20.5 M10.5 3 H16" stroke="#3a3a3a" stroke-width="2.1" fill="none" stroke-linejoin="round"/><path d="M7.3 12.6 L11.7 16.7 L19.7 8.1" stroke="#3a3a3a" stroke-width="2.1" fill="none"/></svg>
<div class="a" style="left:198px;top:622px;font-size:21.4px;line-height:29px;color:#1a7ccd;white-space:nowrap;">2.3.1 编写产品需求规格说明书</div>
<svg class="a" style="left:521px;top:623px" width="28" height="26" viewBox="0 0 28 26"><g stroke="#3d5a85" stroke-width="2.4" fill="none" stroke-linecap="round" stroke-linejoin="round"><path d="M4.6 14.8 V1.6 H22.3 V10.2"/><path d="M9.4 5.8 H13.8 M9.4 10.2 H17.8"/><path d="M7.5 15.8 H2.8 V20.5 C2.8 21.9 3.8 22.9 5.2 22.9 H17.6"/><path d="M7.5 15.8 C9 15.8 10 17.2 11.8 17.2"/></g><path d="M15.2 18.5 L26.1 12.4 L23.9 24.2 Z" fill="#2f8af5"/></svg>
<div class="a" style="left:555px;top:622px;font-size:21.3px;line-height:29px;color:#333;white-space:nowrap;">新能</div>
<div class="a" style="left:486px;top:621px;width:300px;text-align:right;font-size:21.3px;line-height:30px;color:#333;white-space:nowrap">电池技术改...</div>
<svg class="a" style="left:552px;top:623px" width="124" height="24"><rect x="0.0" y="0.0" width="11.9" height="12.6" fill="rgb(240,240,240)"/><rect x="11.3" y="0.0" width="11.9" height="12.6" fill="rgb(227,227,227)"/><rect x="22.5" y="0.0" width="11.9" height="12.6" fill="rgb(243,243,243)"/><rect x="33.8" y="0.0" width="11.9" height="12.6" fill="rgb(232,232,232)"/><rect x="45.1" y="0.0" width="11.9" height="12.6" fill="rgb(219,219,219)"/><rect x="56.4" y="0.0" width="11.9" height="12.6" fill="rgb(234,234,234)"/><rect x="67.6" y="0.0" width="11.9" height="12.6" fill="rgb(210,210,210)"/><rect x="78.9" y="0.0" width="11.9" height="12.6" fill="rgb(233,233,233)"/><rect x="90.2" y="0.0" width="11.9" height="12.6" fill="rgb(240,240,240)"/><rect x="101.5" y="0.0" width="11.9" height="12.6" fill="rgb(227,227,227)"/><rect x="112.7" y="0.0" width="11.9" height="12.6" fill="rgb(239,239,239)"/><rect x="0.0" y="12.0" width="11.9" height="12.6" fill="rgb(224,224,224)"/><rect x="11.3" y="12.0" width="11.9" height="12.6" fill="rgb(235,235,235)"/><rect x="22.5" y="12.0" width="11.9" height="12.6" fill="rgb(218,218,218)"/><rect x="33.8" y="12.0" width="11.9" height="12.6" fill="rgb(194,194,194)"/><rect x="45.1" y="12.0" width="11.9" height="12.6" fill="rgb(215,215,215)"/><rect x="56.4" y="12.0" width="11.9" height="12.6" fill="rgb(180,180,180)"/><rect x="67.6" y="12.0" width="11.9" height="12.6" fill="rgb(222,222,222)"/><rect x="78.9" y="12.0" width="11.9" height="12.6" fill="rgb(219,219,219)"/><rect x="90.2" y="12.0" width="11.9" height="12.6" fill="rgb(189,189,189)"/><rect x="101.5" y="12.0" width="11.9" height="12.6" fill="rgb(208,208,208)"/><rect x="112.7" y="12.0" width="11.9" height="12.6" fill="rgb(203,203,203)"/></svg>
<div class="a" style="left:1005px;top:618px;width:142px;height:35px;border:1.5px solid #a9a9a9;border-radius:18px;text-align:center;font-size:21px;line-height:32px;color:#a0a0a0">未开始</div>
<div class="a" style="left:1173px;top:633px;width:166px;height:10px;border-radius:5px;background:#ffb8c2"></div>
<div class="a" style="left:1172px;top:628px;width:20px;height:20px;border-radius:50%;background:#fff;border:1px solid #dde3ea"></div>
<div class="a" style="left:1366px;top:622px;font-size:21.3px;line-height:29px;color:#1a7ccd;white-space:nowrap;">跟踪</div>
<div class="a" style="left:1558px;top:621px;font-size:22px;line-height:30px;color:#222;white-space:nowrap;letter-spacing:0.5px">2026-05-20</div>
<svg class="a" style="left:164px;top:678px" width="26" height="26" viewBox="0 0 26 26"><path d="M6 3 H3 V23.5 H23.5 V3 H20.5 M10.5 3 H16" stroke="#3a3a3a" stroke-width="2.1" fill="none" stroke-linejoin="round"/><path d="M7.3 12.6 L11.7 16.7 L19.7 8.1" stroke="#3a3a3a" stroke-width="2.1" fill="none"/></svg>
<div class="a" style="left:198px;top:677px;font-size:21.4px;line-height:29px;color:#1a7ccd;white-space:nowrap;">5.4.1 执行安全测试</div>
<svg class="a" style="left:521px;top:678px" width="28" height="26" viewBox="0 0 28 26"><g stroke="#3d5a85" stroke-width="2.4" fill="none" stroke-linecap="round" stroke-linejoin="round"><path d="M4.6 14.8 V1.6 H22.3 V10.2"/><path d="M9.4 5.8 H13.8 M9.4 10.2 H17.8"/><path d="M7.5 15.8 H2.8 V20.5 C2.8 21.9 3.8 22.9 5.2 22.9 H17.6"/><path d="M7.5 15.8 C9 15.8 10 17.2 11.8 17.2"/></g><path d="M15.2 18.5 L26.1 12.4 L23.9 24.2 Z" fill="#2f8af5"/></svg>
<div class="a" style="left:555px;top:677px;font-size:21.3px;line-height:29px;color:#333;white-space:nowrap;">D</div>
<div class="a" style="left:471px;top:676px;width:300px;text-align:right;font-size:21.3px;line-height:30px;color:#333;white-space:nowrap">厂技术...</div>
<svg class="a" style="left:560px;top:672px" width="137" height="36"><rect x="0.0" y="0.0" width="12.0" height="12.6" fill="rgb(226,226,226)"/><rect x="11.4" y="0.0" width="12.0" height="12.6" fill="rgb(228,228,228)"/><rect x="22.8" y="0.0" width="12.0" height="12.6" fill="rgb(221,221,221)"/><rect x="34.2" y="0.0" width="12.0" height="12.6" fill="rgb(224,224,224)"/><rect x="45.7" y="0.0" width="12.0" height="12.6" fill="rgb(219,219,219)"/><rect x="57.1" y="0.0" width="12.0" height="12.6" fill="rgb(224,224,224)"/><rect x="68.5" y="0.0" width="12.0" height="12.6" fill="rgb(221,221,221)"/><rect x="79.9" y="0.0" width="12.0" height="12.6" fill="rgb(218,218,218)"/><rect x="91.3" y="0.0" width="12.0" height="12.6" fill="rgb(214,214,214)"/><rect x="102.8" y="0.0" width="12.0" height="12.6" fill="rgb(244,244,244)"/><rect x="114.2" y="0.0" width="12.0" height="12.6" fill="rgb(223,223,223)"/><rect x="125.6" y="0.0" width="12.0" height="12.6" fill="rgb(228,228,228)"/><rect x="0.0" y="12.0" width="12.0" height="12.6" fill="rgb(181,181,181)"/><rect x="11.4" y="12.0" width="12.0" height="12.6" fill="rgb(207,207,207)"/><rect x="22.8" y="12.0" width="12.0" height="12.6" fill="rgb(188,188,188)"/><rect x="34.2" y="12.0" width="12.0" height="12.6" fill="rgb(233,233,233)"/><rect x="45.7" y="12.0" width="12.0" height="12.6" fill="rgb(223,223,223)"/><rect x="57.1" y="12.0" width="12.0" height="12.6" fill="rgb(218,218,218)"/><rect x="68.5" y="12.0" width="12.0" height="12.6" fill="rgb(180,180,180)"/><rect x="79.9" y="12.0" width="12.0" height="12.6" fill="rgb(197,197,197)"/><rect x="91.3" y="12.0" width="12.0" height="12.6" fill="rgb(233,233,233)"/><rect x="102.8" y="12.0" width="12.0" height="12.6" fill="rgb(189,189,189)"/><rect x="114.2" y="12.0" width="12.0" height="12.6" fill="rgb(185,185,185)"/><rect x="125.6" y="12.0" width="12.0" height="12.6" fill="rgb(235,235,235)"/><rect x="0.0" y="24.0" width="12.0" height="12.6" fill="rgb(226,226,226)"/><rect x="11.4" y="24.0" width="12.0" height="12.6" fill="rgb(238,238,238)"/><rect x="22.8" y="24.0" width="12.0" height="12.6" fill="rgb(237,237,237)"/><rect x="34.2" y="24.0" width="12.0" height="12.6" fill="rgb(218,218,218)"/><rect x="45.7" y="24.0" width="12.0" height="12.6" fill="rgb(226,226,226)"/><rect x="57.1" y="24.0" width="12.0" height="12.6" fill="rgb(232,232,232)"/><rect x="68.5" y="24.0" width="12.0" height="12.6" fill="rgb(224,224,224)"/><rect x="79.9" y="24.0" width="12.0" height="12.6" fill="rgb(241,241,241)"/><rect x="91.3" y="24.0" width="12.0" height="12.6" fill="rgb(245,245,245)"/><rect x="102.8" y="24.0" width="12.0" height="12.6" fill="rgb(246,246,246)"/><rect x="114.2" y="24.0" width="12.0" height="12.6" fill="rgb(237,237,237)"/><rect x="125.6" y="24.0" width="12.0" height="12.6" fill="rgb(233,233,233)"/></svg>
<div class="a" style="left:1005px;top:673px;width:142px;height:35px;border:1.5px solid #2b86d9;border-radius:18px;text-align:center;font-size:21px;line-height:32px;color:#1a7ccd">进行中</div>
<div class="a" style="left:1173px;top:688px;width:166px;height:10px;border-radius:5px;background:#c9ecc3"></div>
<div class="a" style="left:1173px;top:688px;width:63px;height:10px;border-radius:5px;background:#6bc85d"></div>
<div class="a" style="left:1226px;top:683px;width:20px;height:20px;border-radius:50%;background:#fff;border:1px solid #dde3ea"></div>
<div class="a" style="left:1366px;top:677px;font-size:21.3px;line-height:29px;color:#1a7ccd;white-space:nowrap;">跟踪</div>
<div class="a" style="left:1558px;top:676px;font-size:22px;line-height:30px;color:#222;white-space:nowrap;letter-spacing:0.5px">2026-04-06</div>
<svg class="a" style="left:164px;top:732px" width="26" height="26" viewBox="0 0 26 26"><path d="M6 3 H3 V23.5 H23.5 V3 H20.5 M10.5 3 H16" stroke="#3a3a3a" stroke-width="2.1" fill="none" stroke-linejoin="round"/><path d="M7.3 12.6 L11.7 16.7 L19.7 8.1" stroke="#3a3a3a" stroke-width="2.1" fill="none"/></svg>
<div class="a" style="left:198px;top:731px;font-size:21.4px;line-height:29px;color:#1a7ccd;white-space:nowrap;">5.4.1 执行安全测试</div>
<svg class="a" style="left:521px;top:732px" width="28" height="26" viewBox="0 0 28 26"><g stroke="#3d5a85" stroke-width="2.4" fill="none" stroke-linecap="round" stroke-linejoin="round"><path d="M4.6 14.8 V1.6 H22.3 V10.2"/><path d="M9.4 5.8 H13.8 M9.4 10.2 H17.8"/><path d="M7.5 15.8 H2.8 V20.5 C2.8 21.9 3.8 22.9 5.2 22.9 H17.6"/><path d="M7.5 15.8 C9 15.8 10 17.2 11.8 17.2"/></g><path d="M15.2 18.5 L26.1 12.4 L23.9 24.2 Z" fill="#2f8af5"/></svg>
<div class="a" style="left:486px;top:730px;width:300px;text-align:right;font-size:21.3px;line-height:30px;color:#333;white-space:nowrap">术改造...</div>
<svg class="a" style="left:540px;top:731px" width="176" height="37"><rect x="0.0" y="0.0" width="11.6" height="12.9" fill="rgb(216,216,216)"/><rect x="11.0" y="0.0" width="11.6" height="12.9" fill="rgb(243,243,243)"/><rect x="22.0" y="0.0" width="11.6" height="12.9" fill="rgb(225,225,225)"/><rect x="33.0" y="0.0" width="11.6" height="12.9" fill="rgb(227,227,227)"/><rect x="44.0" y="0.0" width="11.6" height="12.9" fill="rgb(226,226,226)"/><rect x="55.0" y="0.0" width="11.6" height="12.9" fill="rgb(228,228,228)"/><rect x="66.0" y="0.0" width="11.6" height="12.9" fill="rgb(214,214,214)"/><rect x="77.0" y="0.0" width="11.6" height="12.9" fill="rgb(238,238,238)"/><rect x="88.0" y="0.0" width="11.6" height="12.9" fill="rgb(229,229,229)"/><rect x="99.0" y="0.0" width="11.6" height="12.9" fill="rgb(239,239,239)"/><rect x="110.0" y="0.0" width="11.6" height="12.9" fill="rgb(235,235,235)"/><rect x="121.0" y="0.0" width="11.6" height="12.9" fill="rgb(235,235,235)"/><rect x="132.0" y="0.0" width="11.6" height="12.9" fill="rgb(217,217,217)"/><rect x="143.0" y="0.0" width="11.6" height="12.9" fill="rgb(226,226,226)"/><rect x="154.0" y="0.0" width="11.6" height="12.9" fill="rgb(224,224,224)"/><rect x="165.0" y="0.0" width="11.6" height="12.9" fill="rgb(230,230,230)"/><rect x="0.0" y="12.3" width="11.6" height="12.9" fill="rgb(202,202,202)"/><rect x="11.0" y="12.3" width="11.6" height="12.9" fill="rgb(231,231,231)"/><rect x="22.0" y="12.3" width="11.6" height="12.9" fill="rgb(196,196,196)"/><rect x="33.0" y="12.3" width="11.6" height="12.9" fill="rgb(203,203,203)"/><rect x="44.0" y="12.3" width="11.6" height="12.9" fill="rgb(231,231,231)"/><rect x="55.0" y="12.3" width="11.6" height="12.9" fill="rgb(220,220,220)"/><rect x="66.0" y="12.3" width="11.6" height="12.9" fill="rgb(220,220,220)"/><rect x="77.0" y="12.3" width="11.6" height="12.9" fill="rgb(213,213,213)"/><rect x="88.0" y="12.3" width="11.6" height="12.9" fill="rgb(189,189,189)"/><rect x="99.0" y="12.3" width="11.6" height="12.9" fill="rgb(190,190,190)"/><rect x="110.0" y="12.3" width="11.6" height="12.9" fill="rgb(215,215,215)"/><rect x="121.0" y="12.3" width="11.6" height="12.9" fill="rgb(222,222,222)"/><rect x="132.0" y="12.3" width="11.6" height="12.9" fill="rgb(222,222,222)"/><rect x="143.0" y="12.3" width="11.6" height="12.9" fill="rgb(197,197,197)"/><rect x="154.0" y="12.3" width="11.6" height="12.9" fill="rgb(190,190,190)"/><rect x="165.0" y="12.3" width="11.6" height="12.9" fill="rgb(180,180,180)"/><rect x="0.0" y="24.7" width="11.6" height="12.9" fill="rgb(214,214,214)"/><rect x="11.0" y="24.7" width="11.6" height="12.9" fill="rgb(217,217,217)"/><rect x="22.0" y="24.7" width="11.6" height="12.9" fill="rgb(248,248,248)"/><rect x="33.0" y="24.7" width="11.6" height="12.9" fill="rgb(231,231,231)"/><rect x="44.0" y="24.7" width="11.6" height="12.9" fill="rgb(211,211,211)"/><rect x="55.0" y="24.7" width="11.6" height="12.9" fill="rgb(215,215,215)"/><rect x="66.0" y="24.7" width="11.6" height="12.9" fill="rgb(227,227,227)"/><rect x="77.0" y="24.7" width="11.6" height="12.9" fill="rgb(223,223,223)"/><rect x="88.0" y="24.7" width="11.6" height="12.9" fill="rgb(234,234,234)"/><rect x="99.0" y="24.7" width="11.6" height="12.9" fill="rgb(235,235,235)"/><rect x="110.0" y="24.7" width="11.6" height="12.9" fill="rgb(247,247,247)"/><rect x="121.0" y="24.7" width="11.6" height="12.9" fill="rgb(238,238,238)"/><rect x="132.0" y="24.7" width="11.6" height="12.9" fill="rgb(248,248,248)"/><rect x="143.0" y="24.7" width="11.6" height="12.9" fill="rgb(216,216,216)"/><rect x="154.0" y="24.7" width="11.6" height="12.9" fill="rgb(217,217,217)"/><rect x="165.0" y="24.7" width="11.6" height="12.9" fill="rgb(247,247,247)"/></svg>
<div class="a" style="left:1005px;top:727px;width:142px;height:35px;border:1.5px solid #a9a9a9;border-radius:18px;text-align:center;font-size:21px;line-height:32px;color:#a0a0a0">未开始</div>
<div class="a" style="left:1173px;top:742px;width:166px;height:10px;border-radius:5px;background:#e6e7ea"></div>
<div class="a" style="left:1172px;top:737px;width:20px;height:20px;border-radius:50%;background:#fff;border:1px solid #dde3ea"></div>
<div class="a" style="left:1366px;top:731px;font-size:21.3px;line-height:29px;color:#1a7ccd;white-space:nowrap;">跟踪</div>
<div class="a" style="left:1558px;top:730px;font-size:22px;line-height:30px;color:#222;white-space:nowrap;letter-spacing:0.5px">2026-04-06</div>
<svg class="a" style="left:164px;top:787px" width="26" height="26" viewBox="0 0 26 26"><path d="M6 3 H3 V23.5 H23.5 V3 H20.5 M10.5 3 H16" stroke="#3a3a3a" stroke-width="2.1" fill="none" stroke-linejoin="round"/><path d="M7.3 12.6 L11.7 16.7 L19.7 8.1" stroke="#3a3a3a" stroke-width="2.1" fill="none"/></svg>
<div class="a" style="left:198px;top:786px;font-size:21.4px;line-height:29px;color:#1a7ccd;white-space:nowrap;">5.4.1 执行安全测试</div>
<svg class="a" style="left:521px;top:787px" width="28" height="26" viewBox="0 0 28 26"><g stroke="#3d5a85" stroke-width="2.4" fill="none" stroke-linecap="round" stroke-linejoin="round"><path d="M4.6 14.8 V1.6 H22.3 V10.2"/><path d="M9.4 5.8 H13.8 M9.4 10.2 H17.8"/><path d="M7.5 15.8 H2.8 V20.5 C2.8 21.9 3.8 22.9 5.2 22.9 H17.6"/><path d="M7.5 15.8 C9 15.8 10 17.2 11.8 17.2"/></g><path d="M15.2 18.5 L26.1 12.4 L23.9 24.2 Z" fill="#2f8af5"/></svg>
<div class="a" style="left:486px;top:785px;width:300px;text-align:right;font-size:21.3px;line-height:30px;color:#333;white-space:nowrap">池技术改...</div>
<svg class="a" style="left:522px;top:780px" width="180" height="36"><rect x="0.0" y="0.0" width="11.8" height="12.6" fill="rgb(223,223,223)"/><rect x="11.2" y="0.0" width="11.8" height="12.6" fill="rgb(210,210,210)"/><rect x="22.5" y="0.0" width="11.8" height="12.6" fill="rgb(243,243,243)"/><rect x="33.8" y="0.0" width="11.8" height="12.6" fill="rgb(212,212,212)"/><rect x="45.0" y="0.0" width="11.8" height="12.6" fill="rgb(220,220,220)"/><rect x="56.2" y="0.0" width="11.8" height="12.6" fill="rgb(225,225,225)"/><rect x="67.5" y="0.0" width="11.8" height="12.6" fill="rgb(211,211,211)"/><rect x="78.8" y="0.0" width="11.8" height="12.6" fill="rgb(213,213,213)"/><rect x="90.0" y="0.0" width="11.8" height="12.6" fill="rgb(219,219,219)"/><rect x="101.2" y="0.0" width="11.8" height="12.6" fill="rgb(233,233,233)"/><rect x="112.5" y="0.0" width="11.8" height="12.6" fill="rgb(225,225,225)"/><rect x="123.8" y="0.0" width="11.8" height="12.6" fill="rgb(217,217,217)"/><rect x="135.0" y="0.0" width="11.8" height="12.6" fill="rgb(231,231,231)"/><rect x="146.2" y="0.0" width="11.8" height="12.6" fill="rgb(239,239,239)"/><rect x="157.5" y="0.0" width="11.8" height="12.6" fill="rgb(232,232,232)"/><rect x="168.8" y="0.0" width="11.8" height="12.6" fill="rgb(227,227,227)"/><rect x="0.0" y="12.0" width="11.8" height="12.6" fill="rgb(205,205,205)"/><rect x="11.2" y="12.0" width="11.8" height="12.6" fill="rgb(196,196,196)"/><rect x="22.5" y="12.0" width="11.8" height="12.6" fill="rgb(202,202,202)"/><rect x="33.8" y="12.0" width="11.8" height="12.6" fill="rgb(194,194,194)"/><rect x="45.0" y="12.0" width="11.8" height="12.6" fill="rgb(239,239,239)"/><rect x="56.2" y="12.0" width="11.8" height="12.6" fill="rgb(234,234,234)"/><rect x="67.5" y="12.0" width="11.8" height="12.6" fill="rgb(193,193,193)"/><rect x="78.8" y="12.0" width="11.8" height="12.6" fill="rgb(235,235,235)"/><rect x="90.0" y="12.0" width="11.8" height="12.6" fill="rgb(202,202,202)"/><rect x="101.2" y="12.0" width="11.8" height="12.6" fill="rgb(231,231,231)"/><rect x="112.5" y="12.0" width="11.8" height="12.6" fill="rgb(200,200,200)"/><rect x="123.8" y="12.0" width="11.8" height="12.6" fill="rgb(194,194,194)"/><rect x="135.0" y="12.0" width="11.8" height="12.6" fill="rgb(199,199,199)"/><rect x="146.2" y="12.0" width="11.8" height="12.6" fill="rgb(239,239,239)"/><rect x="157.5" y="12.0" width="11.8" height="12.6" fill="rgb(226,226,226)"/><rect x="168.8" y="12.0" width="11.8" height="12.6" fill="rgb(212,212,212)"/><rect x="0.0" y="24.0" width="11.8" height="12.6" fill="rgb(236,236,236)"/><rect x="11.2" y="24.0" width="11.8" height="12.6" fill="rgb(224,224,224)"/><rect x="22.5" y="24.0" width="11.8" height="12.6" fill="rgb(246,246,246)"/><rect x="33.8" y="24.0" width="11.8" height="12.6" fill="rgb(239,239,239)"/><rect x="45.0" y="24.0" width="11.8" height="12.6" fill="rgb(236,236,236)"/><rect x="56.2" y="24.0" width="11.8" height="12.6" fill="rgb(241,241,241)"/><rect x="67.5" y="24.0" width="11.8" height="12.6" fill="rgb(215,215,215)"/><rect x="78.8" y="24.0" width="11.8" height="12.6" fill="rgb(239,239,239)"/><rect x="90.0" y="24.0" width="11.8" height="12.6" fill="rgb(246,246,246)"/><rect x="101.2" y="24.0" width="11.8" height="12.6" fill="rgb(233,233,233)"/><rect x="112.5" y="24.0" width="11.8" height="12.6" fill="rgb(238,238,238)"/><rect x="123.8" y="24.0" width="11.8" height="12.6" fill="rgb(246,246,246)"/><rect x="135.0" y="24.0" width="11.8" height="12.6" fill="rgb(230,230,230)"/><rect x="146.2" y="24.0" width="11.8" height="12.6" fill="rgb(238,238,238)"/><rect x="157.5" y="24.0" width="11.8" height="12.6" fill="rgb(235,235,235)"/><rect x="168.8" y="24.0" width="11.8" height="12.6" fill="rgb(214,214,214)"/></svg>
<div class="a" style="left:1005px;top:782px;width:142px;height:35px;border:1.5px solid #2b86d9;border-radius:18px;text-align:center;font-size:21px;line-height:32px;color:#1a7ccd">进行中</div>
<div class="a" style="left:1173px;top:797px;width:166px;height:10px;border-radius:5px;background:#c9ecc3"></div>
<div class="a" style="left:1173px;top:797px;width:46px;height:10px;border-radius:5px;background:#6bc85d"></div>
<div class="a" style="left:1209px;top:792px;width:20px;height:20px;border-radius:50%;background:#fff;border:1px solid #dde3ea"></div>
<div class="a" style="left:1366px;top:786px;font-size:21.3px;line-height:29px;color:#1a7ccd;white-space:nowrap;">跟踪</div>
<div class="a" style="left:1558px;top:785px;font-size:22px;line-height:30px;color:#222;white-space:nowrap;letter-spacing:0.5px">2026-04-06</div>
<svg class="a" style="left:164px;top:841px" width="26" height="26" viewBox="0 0 26 26"><path d="M6 3 H3 V23.5 H23.5 V3 H20.5 M10.5 3 H16" stroke="#3a3a3a" stroke-width="2.1" fill="none" stroke-linejoin="round"/><path d="M7.3 12.6 L11.7 16.7 L19.7 8.1" stroke="#3a3a3a" stroke-width="2.1" fill="none"/></svg>
<div class="a" style="left:198px;top:840px;font-size:21.4px;line-height:29px;color:#1a7ccd;white-space:nowrap;">4.1.2 开发功能模块 B</div>
<svg class="a" style="left:521px;top:841px" width="28" height="26" viewBox="0 0 28 26"><g stroke="#3d5a85" stroke-width="2.4" fill="none" stroke-linecap="round" stroke-linejoin="round"><path d="M4.6 14.8 V1.6 H22.3 V10.2"/><path d="M9.4 5.8 H13.8 M9.4 10.2 H17.8"/><path d="M7.5 15.8 H2.8 V20.5 C2.8 21.9 3.8 22.9 5.2 22.9 H17.6"/><path d="M7.5 15.8 C9 15.8 10 17.2 11.8 17.2"/></g><path d="M15.2 18.5 L26.1 12.4 L23.9 24.2 Z" fill="#2f8af5"/></svg>
<div class="a" style="left:555px;top:840px;font-size:21.3px;line-height:29px;color:#333;white-space:nowrap;">De</div>
<div class="a" style="left:471px;top:839px;width:300px;text-align:right;font-size:21.3px;line-height:30px;color:#333;white-space:nowrap">厂技术...</div>
<svg class="a" style="left:569px;top:839px" width="131" height="32"><rect x="0.0" y="0.0" width="11.5" height="11.3" fill="rgb(233,233,233)"/><rect x="10.9" y="0.0" width="11.5" height="11.3" fill="rgb(240,240,240)"/><rect x="21.8" y="0.0" width="11.5" height="11.3" fill="rgb(240,240,240)"/><rect x="32.8" y="0.0" width="11.5" height="11.3" fill="rgb(228,228,228)"/><rect x="43.7" y="0.0" width="11.5" height="11.3" fill="rgb(236,236,236)"/><rect x="54.6" y="0.0" width="11.5" height="11.3" fill="rgb(224,224,224)"/><rect x="65.5" y="0.0" width="11.5" height="11.3" fill="rgb(238,238,238)"/><rect x="76.4" y="0.0" width="11.5" height="11.3" fill="rgb(210,210,210)"/><rect x="87.3" y="0.0" width="11.5" height="11.3" fill="rgb(236,236,236)"/><rect x="98.2" y="0.0" width="11.5" height="11.3" fill="rgb(226,226,226)"/><rect x="109.2" y="0.0" width="11.5" height="11.3" fill="rgb(225,225,225)"/><rect x="120.1" y="0.0" width="11.5" height="11.3" fill="rgb(224,224,224)"/><rect x="0.0" y="10.7" width="11.5" height="11.3" fill="rgb(180,180,180)"/><rect x="10.9" y="10.7" width="11.5" height="11.3" fill="rgb(198,198,198)"/><rect x="21.8" y="10.7" width="11.5" height="11.3" fill="rgb(199,199,199)"/><rect x="32.8" y="10.7" width="11.5" height="11.3" fill="rgb(232,232,232)"/><rect x="43.7" y="10.7" width="11.5" height="11.3" fill="rgb(201,201,201)"/><rect x="54.6" y="10.7" width="11.5" height="11.3" fill="rgb(222,222,222)"/><rect x="65.5" y="10.7" width="11.5" height="11.3" fill="rgb(189,189,189)"/><rect x="76.4" y="10.7" width="11.5" height="11.3" fill="rgb(240,240,240)"/><rect x="87.3" y="10.7" width="11.5" height="11.3" fill="rgb(227,227,227)"/><rect x="98.2" y="10.7" width="11.5" height="11.3" fill="rgb(218,218,218)"/><rect x="109.2" y="10.7" width="11.5" height="11.3" fill="rgb(199,199,199)"/><rect x="120.1" y="10.7" width="11.5" height="11.3" fill="rgb(181,181,181)"/><rect x="0.0" y="21.3" width="11.5" height="11.3" fill="rgb(224,224,224)"/><rect x="10.9" y="21.3" width="11.5" height="11.3" fill="rgb(248,248,248)"/><rect x="21.8" y="21.3" width="11.5" height="11.3" fill="rgb(226,226,226)"/><rect x="32.8" y="21.3" width="11.5" height="11.3" fill="rgb(211,211,211)"/><rect x="43.7" y="21.3" width="11.5" height="11.3" fill="rgb(219,219,219)"/><rect x="54.6" y="21.3" width="11.5" height="11.3" fill="rgb(248,248,248)"/><rect x="65.5" y="21.3" width="11.5" height="11.3" fill="rgb(211,211,211)"/><rect x="76.4" y="21.3" width="11.5" height="11.3" fill="rgb(239,239,239)"/><rect x="87.3" y="21.3" width="11.5" height="11.3" fill="rgb(239,239,239)"/><rect x="98.2" y="21.3" width="11.5" height="11.3" fill="rgb(248,248,248)"/><rect x="109.2" y="21.3" width="11.5" height="11.3" fill="rgb(228,228,228)"/><rect x="120.1" y="21.3" width="11.5" height="11.3" fill="rgb(224,224,224)"/></svg>
<div class="a" style="left:1005px;top:836px;width:142px;height:35px;border:1.5px solid #2b86d9;border-radius:18px;text-align:center;font-size:21px;line-height:32px;color:#1a7ccd">进行中</div>
<div class="a" style="left:1173px;top:851px;width:166px;height:10px;border-radius:5px;background:#c9ecc3"></div>
<div class="a" style="left:1173px;top:851px;width:19px;height:10px;border-radius:5px;background:#6bc85d"></div>
<div class="a" style="left:1182px;top:846px;width:20px;height:20px;border-radius:50%;background:#fff;border:1px solid #dde3ea"></div>
<div class="a" style="left:1366px;top:840px;font-size:21.3px;line-height:29px;color:#1a7ccd;white-space:nowrap;">跟踪</div>
<div class="a" style="left:1558px;top:839px;font-size:22px;line-height:30px;color:#222;white-space:nowrap;letter-spacing:0.5px">2026-01-05</div>
<svg class="a" style="left:164px;top:895px" width="26" height="26" viewBox="0 0 26 26"><path d="M6 3 H3 V23.5 H23.5 V3 H20.5 M10.5 3 H16" stroke="#3a3a3a" stroke-width="2.1" fill="none" stroke-linejoin="round"/><path d="M7.3 12.6 L11.7 16.7 L19.7 8.1" stroke="#3a3a3a" stroke-width="2.1" fill="none"/></svg>
<div class="a" style="left:198px;top:894px;font-size:21.4px;line-height:29px;color:#1a7ccd;white-space:nowrap;">4.1.2 开发功能模块 B</div>
<svg class="a" style="left:521px;top:895px" width="28" height="26" viewBox="0 0 28 26"><g stroke="#3d5a85" stroke-width="2.4" fill="none" stroke-linecap="round" stroke-linejoin="round"><path d="M4.6 14.8 V1.6 H22.3 V10.2"/><path d="M9.4 5.8 H13.8 M9.4 10.2 H17.8"/><path d="M7.5 15.8 H2.8 V20.5 C2.8 21.9 3.8 22.9 5.2 22.9 H17.6"/><path d="M7.5 15.8 C9 15.8 10 17.2 11.8 17.2"/></g><path d="M15.2 18.5 L26.1 12.4 L23.9 24.2 Z" fill="#2f8af5"/></svg>
<div class="a" style="left:555px;top:894px;font-size:21.3px;line-height:29px;color:#333;white-space:nowrap;">化</div>
<div class="a" style="left:486px;top:893px;width:300px;text-align:right;font-size:21.3px;line-height:30px;color:#333;white-space:nowrap">技术改造...</div>
<svg class="a" style="left:579px;top:887px" width="116" height="37"><rect x="0.0" y="0.0" width="11.1" height="12.9" fill="rgb(243,243,243)"/><rect x="10.5" y="0.0" width="11.1" height="12.9" fill="rgb(236,236,236)"/><rect x="21.1" y="0.0" width="11.1" height="12.9" fill="rgb(229,229,229)"/><rect x="31.6" y="0.0" width="11.1" height="12.9" fill="rgb(233,233,233)"/><rect x="42.2" y="0.0" width="11.1" height="12.9" fill="rgb(228,228,228)"/><rect x="52.7" y="0.0" width="11.1" height="12.9" fill="rgb(221,221,221)"/><rect x="63.3" y="0.0" width="11.1" height="12.9" fill="rgb(244,244,244)"/><rect x="73.8" y="0.0" width="11.1" height="12.9" fill="rgb(227,227,227)"/><rect x="84.4" y="0.0" width="11.1" height="12.9" fill="rgb(217,217,217)"/><rect x="94.9" y="0.0" width="11.1" height="12.9" fill="rgb(211,211,211)"/><rect x="105.5" y="0.0" width="11.1" height="12.9" fill="rgb(225,225,225)"/><rect x="0.0" y="12.3" width="11.1" height="12.9" fill="rgb(204,204,204)"/><rect x="10.5" y="12.3" width="11.1" height="12.9" fill="rgb(232,232,232)"/><rect x="21.1" y="12.3" width="11.1" height="12.9" fill="rgb(227,227,227)"/><rect x="31.6" y="12.3" width="11.1" height="12.9" fill="rgb(206,206,206)"/><rect x="42.2" y="12.3" width="11.1" height="12.9" fill="rgb(196,196,196)"/><rect x="52.7" y="12.3" width="11.1" height="12.9" fill="rgb(235,235,235)"/><rect x="63.3" y="12.3" width="11.1" height="12.9" fill="rgb(212,212,212)"/><rect x="73.8" y="12.3" width="11.1" height="12.9" fill="rgb(231,231,231)"/><rect x="84.4" y="12.3" width="11.1" height="12.9" fill="rgb(200,200,200)"/><rect x="94.9" y="12.3" width="11.1" height="12.9" fill="rgb(220,220,220)"/><rect x="105.5" y="12.3" width="11.1" height="12.9" fill="rgb(234,234,234)"/><rect x="0.0" y="24.7" width="11.1" height="12.9" fill="rgb(235,235,235)"/><rect x="10.5" y="24.7" width="11.1" height="12.9" fill="rgb(218,218,218)"/><rect x="21.1" y="24.7" width="11.1" height="12.9" fill="rgb(245,245,245)"/><rect x="31.6" y="24.7" width="11.1" height="12.9" fill="rgb(213,213,213)"/><rect x="42.2" y="24.7" width="11.1" height="12.9" fill="rgb(218,218,218)"/><rect x="52.7" y="24.7" width="11.1" height="12.9" fill="rgb(222,222,222)"/><rect x="63.3" y="24.7" width="11.1" height="12.9" fill="rgb(219,219,219)"/><rect x="73.8" y="24.7" width="11.1" height="12.9" fill="rgb(244,244,244)"/><rect x="84.4" y="24.7" width="11.1" height="12.9" fill="rgb(245,245,245)"/><rect x="94.9" y="24.7" width="11.1" height="12.9" fill="rgb(223,223,223)"/><rect x="105.5" y="24.7" width="11.1" height="12.9" fill="rgb(231,231,231)"/></svg>
<div class="a" style="left:1005px;top:890px;width:142px;height:35px;border:1.5px solid #a9a9a9;border-radius:18px;text-align:center;font-size:21px;line-height:32px;color:#a0a0a0">未开始</div>
<div class="a" style="left:1173px;top:905px;width:166px;height:10px;border-radius:5px;background:#e6e7ea"></div>
<div class="a" style="left:1172px;top:900px;width:20px;height:20px;border-radius:50%;background:#fff;border:1px solid #dde3ea"></div>
<div class="a" style="left:1366px;top:894px;font-size:21.3px;line-height:29px;color:#1a7ccd;white-space:nowrap;">跟踪</div>
<div class="a" style="left:1558px;top:893px;font-size:22px;line-height:30px;color:#222;white-space:nowrap;letter-spacing:0.5px">2026-01-05</div>
<svg class="a" style="left:164px;top:950px" width="26" height="26" viewBox="0 0 26 26"><path d="M6 3 H3 V23.5 H23.5 V3 H20.5 M10.5 3 H16" stroke="#3a3a3a" stroke-width="2.1" fill="none" stroke-linejoin="round"/><path d="M7.3 12.6 L11.7 16.7 L19.7 8.1" stroke="#3a3a3a" stroke-width="2.1" fill="none"/></svg>
<div class="a" style="left:198px;top:949px;font-size:21.4px;line-height:29px;color:#1a7ccd;white-space:nowrap;">4.1.2 开发功能模块 B</div>
<svg class="a" style="left:521px;top:950px" width="28" height="26" viewBox="0 0 28 26"><g stroke="#3d5a85" stroke-width="2.4" fill="none" stroke-linecap="round" stroke-linejoin="round"><path d="M4.6 14.8 V1.6 H22.3 V10.2"/><path d="M9.4 5.8 H13.8 M9.4 10.2 H17.8"/><path d="M7.5 15.8 H2.8 V20.5 C2.8 21.9 3.8 22.9 5.2 22.9 H17.6"/><path d="M7.5 15.8 C9 15.8 10 17.2 11.8 17.2"/></g><path d="M15.2 18.5 L26.1 12.4 L23.9 24.2 Z" fill="#2f8af5"/></svg>
<div class="a" style="left:486px;top:948px;width:300px;text-align:right;font-size:21.3px;line-height:30px;color:#333;white-space:nowrap">电池技术改...</div>
<svg class="a" style="left:545px;top:948px" width="128" height="36"><rect x="0.0" y="0.0" width="11.3" height="12.6" fill="rgb(221,221,221)"/><rect x="10.7" y="0.0" width="11.3" height="12.6" fill="rgb(217,217,217)"/><rect x="21.3" y="0.0" width="11.3" height="12.6" fill="rgb(238,238,238)"/><rect x="32.0" y="0.0" width="11.3" height="12.6" fill="rgb(231,231,231)"/><rect x="42.7" y="0.0" width="11.3" height="12.6" fill="rgb(225,225,225)"/><rect x="53.3" y="0.0" width="11.3" height="12.6" fill="rgb(222,222,222)"/><rect x="64.0" y="0.0" width="11.3" height="12.6" fill="rgb(241,241,241)"/><rect x="74.7" y="0.0" width="11.3" height="12.6" fill="rgb(241,241,241)"/><rect x="85.3" y="0.0" width="11.3" height="12.6" fill="rgb(221,221,221)"/><rect x="96.0" y="0.0" width="11.3" height="12.6" fill="rgb(240,240,240)"/><rect x="106.7" y="0.0" width="11.3" height="12.6" fill="rgb(228,228,228)"/><rect x="117.3" y="0.0" width="11.3" height="12.6" fill="rgb(239,239,239)"/><rect x="0.0" y="12.0" width="11.3" height="12.6" fill="rgb(236,236,236)"/><rect x="10.7" y="12.0" width="11.3" height="12.6" fill="rgb(196,196,196)"/><rect x="21.3" y="12.0" width="11.3" height="12.6" fill="rgb(192,192,192)"/><rect x="32.0" y="12.0" width="11.3" height="12.6" fill="rgb(196,196,196)"/><rect x="42.7" y="12.0" width="11.3" height="12.6" fill="rgb(237,237,237)"/><rect x="53.3" y="12.0" width="11.3" height="12.6" fill="rgb(224,224,224)"/><rect x="64.0" y="12.0" width="11.3" height="12.6" fill="rgb(187,187,187)"/><rect x="74.7" y="12.0" width="11.3" height="12.6" fill="rgb(200,200,200)"/><rect x="85.3" y="12.0" width="11.3" height="12.6" fill="rgb(213,213,213)"/><rect x="96.0" y="12.0" width="11.3" height="12.6" fill="rgb(223,223,223)"/><rect x="106.7" y="12.0" width="11.3" height="12.6" fill="rgb(228,228,228)"/><rect x="117.3" y="12.0" width="11.3" height="12.6" fill="rgb(230,230,230)"/><rect x="0.0" y="24.0" width="11.3" height="12.6" fill="rgb(221,221,221)"/><rect x="10.7" y="24.0" width="11.3" height="12.6" fill="rgb(225,225,225)"/><rect x="21.3" y="24.0" width="11.3" height="12.6" fill="rgb(220,220,220)"/><rect x="32.0" y="24.0" width="11.3" height="12.6" fill="rgb(225,225,225)"/><rect x="42.7" y="24.0" width="11.3" height="12.6" fill="rgb(222,222,222)"/><rect x="53.3" y="24.0" width="11.3" height="12.6" fill="rgb(233,233,233)"/><rect x="64.0" y="24.0" width="11.3" height="12.6" fill="rgb(246,246,246)"/><rect x="74.7" y="24.0" width="11.3" height="12.6" fill="rgb(242,242,242)"/><rect x="85.3" y="24.0" width="11.3" height="12.6" fill="rgb(222,222,222)"/><rect x="96.0" y="24.0" width="11.3" height="12.6" fill="rgb(241,241,241)"/><rect x="106.7" y="24.0" width="11.3" height="12.6" fill="rgb(223,223,223)"/><rect x="117.3" y="24.0" width="11.3" height="12.6" fill="rgb(229,229,229)"/></svg>
<div class="a" style="left:1005px;top:945px;width:142px;height:35px;border:1.5px solid #a9a9a9;border-radius:18px;text-align:center;font-size:21px;line-height:32px;color:#a0a0a0">未开始</div>
<div class="a" style="left:1173px;top:960px;width:166px;height:10px;border-radius:5px;background:#e6e7ea"></div>
<div class="a" style="left:1172px;top:955px;width:20px;height:20px;border-radius:50%;background:#fff;border:1px solid #dde3ea"></div>
<div class="a" style="left:1366px;top:949px;font-size:21.3px;line-height:29px;color:#1a7ccd;white-space:nowrap;">跟踪</div>
<div class="a" style="left:1558px;top:948px;font-size:22px;line-height:30px;color:#222;white-space:nowrap;letter-spacing:0.5px">2026-01-05</div>
<svg class="a" style="left:164px;top:1004px" width="26" height="26" viewBox="0 0 26 26"><path d="M6 3 H3 V23.5 H23.5 V3 H20.5 M10.5 3 H16" stroke="#3a3a3a" stroke-width="2.1" fill="none" stroke-linejoin="round"/><path d="M7.3 12.6 L11.7 16.7 L19.7 8.1" stroke="#3a3a3a" stroke-width="2.1" fill="none"/></svg>
<div class="a" style="left:198px;top:1003px;font-size:21.4px;line-height:29px;color:#1a7ccd;white-space:nowrap;">3.1.1 召开投资决策会议</div>
<svg class="a" style="left:521px;top:1004px" width="28" height="26" viewBox="0 0 28 26"><g stroke="#3d5a85" stroke-width="2.4" fill="none" stroke-linecap="round" stroke-linejoin="round"><path d="M4.6 14.8 V1.6 H22.3 V10.2"/><path d="M9.4 5.8 H13.8 M9.4 10.2 H17.8"/><path d="M7.5 15.8 H2.8 V20.5 C2.8 21.9 3.8 22.9 5.2 22.9 H17.6"/><path d="M7.5 15.8 C9 15.8 10 17.2 11.8 17.2"/></g><path d="M15.2 18.5 L26.1 12.4 L23.9 24.2 Z" fill="#2f8af5"/></svg>
<div class="a" style="left:555px;top:1003px;font-size:21.3px;line-height:29px;color:#333;white-space:nowrap;">De</div>
<div class="a" style="left:471px;top:1002px;width:300px;text-align:right;font-size:21.3px;line-height:30px;color:#333;white-space:nowrap">人工智能...</div>
<svg class="a" style="left:575px;top:1006px" width="96" height="26"><rect x="0.0" y="0.0" width="11.3" height="13.6" fill="rgb(212,212,212)"/><rect x="10.7" y="0.0" width="11.3" height="13.6" fill="rgb(243,243,243)"/><rect x="21.3" y="0.0" width="11.3" height="13.6" fill="rgb(217,217,217)"/><rect x="32.0" y="0.0" width="11.3" height="13.6" fill="rgb(242,242,242)"/><rect x="42.7" y="0.0" width="11.3" height="13.6" fill="rgb(222,222,222)"/><rect x="53.3" y="0.0" width="11.3" height="13.6" fill="rgb(235,235,235)"/><rect x="64.0" y="0.0" width="11.3" height="13.6" fill="rgb(232,232,232)"/><rect x="74.7" y="0.0" width="11.3" height="13.6" fill="rgb(243,243,243)"/><rect x="85.3" y="0.0" width="11.3" height="13.6" fill="rgb(228,228,228)"/><rect x="0.0" y="13.0" width="11.3" height="13.6" fill="rgb(217,217,217)"/><rect x="10.7" y="13.0" width="11.3" height="13.6" fill="rgb(189,189,189)"/><rect x="21.3" y="13.0" width="11.3" height="13.6" fill="rgb(218,218,218)"/><rect x="32.0" y="13.0" width="11.3" height="13.6" fill="rgb(196,196,196)"/><rect x="42.7" y="13.0" width="11.3" height="13.6" fill="rgb(186,186,186)"/><rect x="53.3" y="13.0" width="11.3" height="13.6" fill="rgb(196,196,196)"/><rect x="64.0" y="13.0" width="11.3" height="13.6" fill="rgb(206,206,206)"/><rect x="74.7" y="13.0" width="11.3" height="13.6" fill="rgb(200,200,200)"/><rect x="85.3" y="13.0" width="11.3" height="13.6" fill="rgb(197,197,197)"/></svg>
<div class="a" style="left:1005px;top:999px;width:142px;height:35px;border:1.5px solid #a9a9a9;border-radius:18px;text-align:center;font-size:21px;line-height:32px;color:#a0a0a0">未开始</div>
<div class="a" style="left:1173px;top:1014px;width:166px;height:10px;border-radius:5px;background:#ffb8c2"></div>
<div class="a" style="left:1172px;top:1009px;width:20px;height:20px;border-radius:50%;background:#fff;border:1px solid #dde3ea"></div>
<div class="a" style="left:1366px;top:1003px;font-size:21.3px;line-height:29px;color:#1a7ccd;white-space:nowrap;">跟踪</div>
<div class="a" style="left:1558px;top:1002px;font-size:22px;line-height:30px;color:#222;white-space:nowrap;letter-spacing:0.5px">2026-01-02</div>
<div class="a" style="left:1542px;top:1055px;font-size:21.8px;line-height:30px;color:#8a8f99;white-space:nowrap;">共182条</div>
<div class="a" style="left:1643px;top:1053px;width:37px;height:37px;background:#6e7a8c;color:#fff;font-size:21px;line-height:38px;text-align:center">1</div>
<div class="a" style="left:1688px;top:1052px;width:37px;height:38px;border:1px solid #e6e6e6;color:#4e5663;font-size:21px;line-height:36px;text-align:center">2</div>
<div class="a" style="left:1732px;top:1052px;width:37px;height:38px;border:1px solid #e6e6e6;color:#4e5663;font-size:21px;line-height:36px;text-align:center">3</div>
<div class="a" style="left:1777px;top:1052px;width:37px;height:38px;border:1px solid #e6e6e6;color:#4e5663;font-size:21px;line-height:36px;text-align:center">4</div>
<div class="a" style="left:1827px;top:1052px;width:39px;height:39px;border:1px solid #e3e3e3"></div>
<svg class="a" style="left:1840px;top:1064px" width="14" height="16" viewBox="0 0 14 16"><path d="M4 3 L10 8 L4 13" stroke="#555" stroke-width="2" fill="none"/></svg>
<div class="card" style="left:131px;top:1156px;width:1776px;height:220px"></div>
<div class="a" style="left:151px;top:1176px;font-size:25px;line-height:35px;color:#222;white-space:nowrap;">我的空间</div>
<div class="a" style="left:1677px;top:1181px;font-size:21px;line-height:29px;color:#444;white-space:nowrap;">我关注的</div>
<svg class="a" style="left:1777px;top:1189px" width="18" height="12" viewBox="0 0 18 12"><path d="M2 2 L9 9 L16 2" stroke="#666" stroke-width="1.8" fill="none"/></svg>
<div class="a" style="left:1824px;top:1182px;font-size:21px;line-height:29px;color:#1a7ccd;white-space:nowrap;">更多</div>
<div class="a" style="left:152px;top:1241px;font-size:25px;line-height:35px;color:#1a7ccd;white-space:nowrap;">项目</div>
<div class="a" style="left:241px;top:1241px;font-size:25px;line-height:35px;color:#4a4f57;white-space:nowrap;">项目群</div>
<div class="a" style="left:355px;top:1241px;font-size:25px;line-height:35px;color:#4a4f57;white-space:nowrap;">项目组合</div>
<div class="a" style="left:494px;top:1241px;font-size:25px;line-height:35px;color:#4a4f57;white-space:nowrap;">团队</div>
<div class="a" style="left:582px;top:1241px;font-size:25px;line-height:35px;color:#4a4f57;white-space:nowrap;">产品</div>
<div class="a" style="left:671px;top:1241px;font-size:25px;line-height:35px;color:#4a4f57;white-space:nowrap;">投资计划</div>
<div class="a" style="left:810px;top:1241px;font-size:25px;line-height:35px;color:#4a4f57;white-space:nowrap;">需求空间</div>
<div class="a" style="left:949px;top:1241px;font-size:25px;line-height:35px;color:#4a4f57;white-space:nowrap;">销售空间</div>
<div class="a" style="left:132px;top:1296px;width:1774px;height:2px;background:#ebebeb"></div>
<div class="a" style="left:152px;top:1295px;width:50px;height:4px;background:#0a78c8"></div>
<div class="a" style="left:157px;top:1319px;width:556px;height:60px;border:1px solid #e6e6e6"></div>
<div class="a" style="left:741px;top:1319px;width:556px;height:60px;border:1px solid #e6e6e6"></div>
<div class="a" style="left:1325px;top:1319px;width:556px;height:60px;border:1px solid #e6e6e6"></div>
<div class="card" style="left:1929px;top:265px;width:578px;height:225px"></div>
<svg class="a" style="left:1967px;top:300px" width="205" height="36"><rect x="0.0" y="0.0" width="12.7" height="12.6" fill="rgb(192,192,192)"/><rect x="12.1" y="0.0" width="12.7" height="12.6" fill="rgb(214,214,214)"/><rect x="24.1" y="0.0" width="12.7" height="12.6" fill="rgb(211,211,211)"/><rect x="36.2" y="0.0" width="12.7" height="12.6" fill="rgb(185,185,185)"/><rect x="48.2" y="0.0" width="12.7" height="12.6" fill="rgb(200,200,200)"/><rect x="60.3" y="0.0" width="12.7" height="12.6" fill="rgb(215,215,215)"/><rect x="72.4" y="0.0" width="12.7" height="12.6" fill="rgb(207,207,207)"/><rect x="84.4" y="0.0" width="12.7" height="12.6" fill="rgb(217,217,217)"/><rect x="96.5" y="0.0" width="12.7" height="12.6" fill="rgb(214,214,214)"/><rect x="108.5" y="0.0" width="12.7" height="12.6" fill="rgb(181,181,181)"/><rect x="120.6" y="0.0" width="12.7" height="12.6" fill="rgb(215,215,215)"/><rect x="132.6" y="0.0" width="12.7" height="12.6" fill="rgb(177,177,177)"/><rect x="144.7" y="0.0" width="12.7" height="12.6" fill="rgb(230,230,230)"/><rect x="156.8" y="0.0" width="12.7" height="12.6" fill="rgb(207,207,207)"/><rect x="168.8" y="0.0" width="12.7" height="12.6" fill="rgb(193,193,193)"/><rect x="180.9" y="0.0" width="12.7" height="12.6" fill="rgb(212,212,212)"/><rect x="192.9" y="0.0" width="12.7" height="12.6" fill="rgb(191,191,191)"/><rect x="0.0" y="12.0" width="12.7" height="12.6" fill="rgb(154,154,154)"/><rect x="12.1" y="12.0" width="12.7" height="12.6" fill="rgb(221,221,221)"/><rect x="24.1" y="12.0" width="12.7" height="12.6" fill="rgb(190,190,190)"/><rect x="36.2" y="12.0" width="12.7" height="12.6" fill="rgb(199,199,199)"/><rect x="48.2" y="12.0" width="12.7" height="12.6" fill="rgb(200,200,200)"/><rect x="60.3" y="12.0" width="12.7" height="12.6" fill="rgb(190,190,190)"/><rect x="72.4" y="12.0" width="12.7" height="12.6" fill="rgb(180,180,180)"/><rect x="84.4" y="12.0" width="12.7" height="12.6" fill="rgb(211,211,211)"/><rect x="96.5" y="12.0" width="12.7" height="12.6" fill="rgb(149,149,149)"/><rect x="108.5" y="12.0" width="12.7" height="12.6" fill="rgb(159,159,159)"/><rect x="120.6" y="12.0" width="12.7" height="12.6" fill="rgb(211,211,211)"/><rect x="132.6" y="12.0" width="12.7" height="12.6" fill="rgb(149,149,149)"/><rect x="144.7" y="12.0" width="12.7" height="12.6" fill="rgb(196,196,196)"/><rect x="156.8" y="12.0" width="12.7" height="12.6" fill="rgb(179,179,179)"/><rect x="168.8" y="12.0" width="12.7" height="12.6" fill="rgb(224,224,224)"/><rect x="180.9" y="12.0" width="12.7" height="12.6" fill="rgb(131,131,131)"/><rect x="192.9" y="12.0" width="12.7" height="12.6" fill="rgb(215,215,215)"/><rect x="0.0" y="24.0" width="12.7" height="12.6" fill="rgb(226,226,226)"/><rect x="12.1" y="24.0" width="12.7" height="12.6" fill="rgb(181,181,181)"/><rect x="24.1" y="24.0" width="12.7" height="12.6" fill="rgb(187,187,187)"/><rect x="36.2" y="24.0" width="12.7" height="12.6" fill="rgb(225,225,225)"/><rect x="48.2" y="24.0" width="12.7" height="12.6" fill="rgb(214,214,214)"/><rect x="60.3" y="24.0" width="12.7" height="12.6" fill="rgb(179,179,179)"/><rect x="72.4" y="24.0" width="12.7" height="12.6" fill="rgb(196,196,196)"/><rect x="84.4" y="24.0" width="12.7" height="12.6" fill="rgb(226,226,226)"/><rect x="96.5" y="24.0" width="12.7" height="12.6" fill="rgb(178,178,178)"/><rect x="108.5" y="24.0" width="12.7" height="12.6" fill="rgb(229,229,229)"/><rect x="120.6" y="24.0" width="12.7" height="12.6" fill="rgb(232,232,232)"/><rect x="132.6" y="24.0" width="12.7" height="12.6" fill="rgb(194,194,194)"/><rect x="144.7" y="24.0" width="12.7" height="12.6" fill="rgb(207,207,207)"/><rect x="156.8" y="24.0" width="12.7" height="12.6" fill="rgb(215,215,215)"/><rect x="168.8" y="24.0" width="12.7" height="12.6" fill="rgb(223,223,223)"/><rect x="180.9" y="24.0" width="12.7" height="12.6" fill="rgb(233,233,233)"/><rect x="192.9" y="24.0" width="12.7" height="12.6" fill="rgb(201,201,201)"/></svg>
<svg class="a" style="left:1957px;top:350px" width="88" height="34"><rect x="0.0" y="0.0" width="13.2" height="11.9" fill="rgb(215,215,221)"/><rect x="12.6" y="0.0" width="13.2" height="11.9" fill="rgb(219,219,225)"/><rect x="25.1" y="0.0" width="13.2" height="11.9" fill="rgb(206,206,212)"/><rect x="37.7" y="0.0" width="13.2" height="11.9" fill="rgb(225,225,231)"/><rect x="50.3" y="0.0" width="13.2" height="11.9" fill="rgb(230,230,236)"/><rect x="62.9" y="0.0" width="13.2" height="11.9" fill="rgb(209,209,215)"/><rect x="75.4" y="0.0" width="13.2" height="11.9" fill="rgb(205,205,211)"/><rect x="0.0" y="11.3" width="13.2" height="11.9" fill="rgb(179,179,185)"/><rect x="12.6" y="11.3" width="13.2" height="11.9" fill="rgb(176,176,182)"/><rect x="25.1" y="11.3" width="13.2" height="11.9" fill="rgb(200,200,206)"/><rect x="37.7" y="11.3" width="13.2" height="11.9" fill="rgb(210,210,216)"/><rect x="50.3" y="11.3" width="13.2" height="11.9" fill="rgb(193,193,199)"/><rect x="62.9" y="11.3" width="13.2" height="11.9" fill="rgb(223,223,229)"/><rect x="75.4" y="11.3" width="13.2" height="11.9" fill="rgb(178,178,184)"/><rect x="0.0" y="22.7" width="13.2" height="11.9" fill="rgb(214,214,220)"/><rect x="12.6" y="22.7" width="13.2" height="11.9" fill="rgb(233,233,239)"/><rect x="25.1" y="22.7" width="13.2" height="11.9" fill="rgb(223,223,229)"/><rect x="37.7" y="22.7" width="13.2" height="11.9" fill="rgb(217,217,223)"/><rect x="50.3" y="22.7" width="13.2" height="11.9" fill="rgb(211,211,217)"/><rect x="62.9" y="22.7" width="13.2" height="11.9" fill="rgb(206,206,212)"/><rect x="75.4" y="22.7" width="13.2" height="11.9" fill="rgb(216,216,222)"/></svg>
<div class="a" style="left:2044px;top:351px;font-size:22px;line-height:30px;color:#555;white-space:nowrap;">团</div>
<div class="a" style="left:1963px;top:398px;width:176px;height:40px;background:#f3f3f4;border-radius:4px;font-size:21px;line-height:40px;text-align:center;color:#7b7f87">未设置工作地点</div>
<div class="a" style="left:2156px;top:398px;width:154px;height:40px;background:#f3f3f4;border-radius:4px;font-size:21px;line-height:40px;text-align:center;color:#7b7f87">高级项目经理</div>
<div class="a" style="left:2360px;top:312px;width:112px;height:112px;border-radius:50%;background:#0077cc;color:#fff;font-size:33px;line-height:112px;text-align:center">用户</div>
<div class="card" style="left:1929px;top:512px;width:578px;height:860px"></div>
<div class="a" style="left:1963px;top:553px;font-size:25px;line-height:35px;color:#222;white-space:nowrap;">个人日历</div>
<div class="a" style="left:2343px;top:556px;font-size:21px;line-height:29px;color:#444;white-space:nowrap;">全部</div>
<svg class="a" style="left:2400px;top:563px" width="18" height="12" viewBox="0 0 18 12"><path d="M2 2 L9 9 L16 2" stroke="#666" stroke-width="1.8" fill="none"/></svg>
<div class="a" style="left:2446px;top:556px;font-size:21px;line-height:29px;color:#1a7ccd;white-space:nowrap;">更多</div>
<svg class="a" style="left:1964px;top:622px" width="16" height="22" viewBox="0 0 16 22"><path d="M11 3 L4 11 L11 19" stroke="#555" stroke-width="2.2" fill="none"/></svg>
<div class="a" style="left:1996px;top:617px;font-size:24px;line-height:33px;color:#333;white-space:nowrap;">2025-09</div>
<svg class="a" style="left:2104px;top:622px" width="16" height="22" viewBox="0 0 16 22"><path d="M5 3 L12 11 L5 19" stroke="#555" stroke-width="2.2" fill="none"/></svg>
<div class="a" style="left:2446px;top:619px;font-size:21px;line-height:29px;color:#1a7ccd;white-space:nowrap;">今天</div>
<div class="a" style="left:1956px;top:676px;width:60px;text-align:center;font-size:21px;line-height:32px;color:#111">日</div>
<div class="a" style="left:2035px;top:676px;width:60px;text-align:center;font-size:21px;line-height:32px;color:#111">一</div>
<div class="a" style="left:2113px;top:676px;width:60px;text-align:center;font-size:21px;line-height:32px;color:#111">二</div>
<div class="a" style="left:2192px;top:676px;width:60px;text-align:center;font-size:21px;line-height:32px;color:#111">三</div>
<div class="a" style="left:2271px;top:676px;width:60px;text-align:center;font-size:21px;line-height:32px;color:#111">四</div>
<div class="a" style="left:2349px;top:676px;width:60px;text-align:center;font-size:21px;line-height:32px;color:#111">五</div>
<div class="a" style="left:2428px;top:676px;width:60px;text-align:center;font-size:21px;line-height:32px;color:#111">六</div>
<div class="a" style="left:1956px;top:756px;width:60px;text-align:center;font-size:22px;line-height:32px;color:#8c8c8c">31</div>
<div class="a" style="left:1978px;top:788px;width:6px;height:6px;border-radius:50%;background:#6a9ff0"></div>
<div class="a" style="left:1989px;top:788px;width:6px;height:6px;border-radius:50%;background:#f59a0a"></div>
<div class="a" style="left:2035px;top:756px;width:60px;text-align:center;font-size:22px;line-height:32px;color:#3d4048">1</div>
<div class="a" style="left:2057px;top:788px;width:6px;height:6px;border-radius:50%;background:#6a9ff0"></div>
<div class="a" style="left:2068px;top:788px;width:6px;height:6px;border-radius:50%;background:#f59a0a"></div>
<div class="a" style="left:2113px;top:756px;width:60px;text-align:center;font-size:22px;line-height:32px;color:#3d4048">2</div>
<div class="a" style="left:2135px;top:788px;width:6px;height:6px;border-radius:50%;background:#6a9ff0"></div>
<div class="a" style="left:2146px;top:788px;width:6px;height:6px;border-radius:50%;background:#f59a0a"></div>
<div class="a" style="left:2192px;top:756px;width:60px;text-align:center;font-size:22px;line-height:32px;color:#3d4048">3</div>
<div class="a" style="left:2214px;top:788px;width:6px;height:6px;border-radius:50%;background:#6a9ff0"></div>
<div class="a" style="left:2225px;top:788px;width:6px;height:6px;border-radius:50%;background:#f59a0a"></div>
<div class="a" style="left:2271px;top:756px;width:60px;text-align:center;font-size:22px;line-height:32px;color:#3d4048">4</div>
<div class="a" style="left:2293px;top:788px;width:6px;height:6px;border-radius:50%;background:#6a9ff0"></div>
<div class="a" style="left:2304px;top:788px;width:6px;height:6px;border-radius:50%;background:#f59a0a"></div>
<div class="a" style="left:2349px;top:756px;width:60px;text-align:center;font-size:22px;line-height:32px;color:#3d4048">5</div>
<div class="a" style="left:2371px;top:788px;width:6px;height:6px;border-radius:50%;background:#6a9ff0"></div>
<div class="a" style="left:2382px;top:788px;width:6px;height:6px;border-radius:50%;background:#f59a0a"></div>
<div class="a" style="left:2428px;top:756px;width:60px;text-align:center;font-size:22px;line-height:32px;color:#3d4048">6</div>
<div class="a" style="left:2450px;top:788px;width:6px;height:6px;border-radius:50%;background:#6a9ff0"></div>
<div class="a" style="left:2461px;top:788px;width:6px;height:6px;border-radius:50%;background:#f59a0a"></div>
<div class="a" style="left:1956px;top:822px;width:60px;text-align:center;font-size:22px;line-height:32px;color:#3d4048">7</div>
<div class="a" style="left:1978px;top:854px;width:6px;height:6px;border-radius:50%;background:#6a9ff0"></div>
<div class="a" style="left:1989px;top:854px;width:6px;height:6px;border-radius:50%;background:#f59a0a"></div>
<div class="a" style="left:2035px;top:822px;width:60px;text-align:center;font-size:22px;line-height:32px;color:#3d4048">8</div>
<div class="a" style="left:2057px;top:854px;width:6px;height:6px;border-radius:50%;background:#6a9ff0"></div>
<div class="a" style="left:2068px;top:854px;width:6px;height:6px;border-radius:50%;background:#f59a0a"></div>
<div class="a" style="left:2113px;top:822px;width:60px;text-align:center;font-size:22px;line-height:32px;color:#3d4048">9</div>
<div class="a" style="left:2135px;top:854px;width:6px;height:6px;border-radius:50%;background:#6a9ff0"></div>
<div class="a" style="left:2146px;top:854px;width:6px;height:6px;border-radius:50%;background:#f59a0a"></div>
<div class="a" style="left:2192px;top:822px;width:60px;text-align:center;font-size:22px;line-height:32px;color:#3d4048">10</div>
<div class="a" style="left:2214px;top:854px;width:6px;height:6px;border-radius:50%;background:#6a9ff0"></div>
<div class="a" style="left:2225px;top:854px;width:6px;height:6px;border-radius:50%;background:#f59a0a"></div>
<div class="a" style="left:2271px;top:822px;width:60px;text-align:center;font-size:22px;line-height:32px;color:#3d4048">11</div>
<div class="a" style="left:2293px;top:854px;width:6px;height:6px;border-radius:50%;background:#6a9ff0"></div>
<div class="a" style="left:2304px;top:854px;width:6px;height:6px;border-radius:50%;background:#f59a0a"></div>
<div class="a" style="left:2349px;top:822px;width:60px;text-align:center;font-size:22px;line-height:32px;color:#3d4048">12</div>
<div class="a" style="left:2371px;top:854px;width:6px;height:6px;border-radius:50%;background:#6a9ff0"></div>
<div class="a" style="left:2382px;top:854px;width:6px;height:6px;border-radius:50%;background:#f59a0a"></div>
<div class="a" style="left:2428px;top:822px;width:60px;text-align:center;font-size:22px;line-height:32px;color:#3d4048">13</div>
<div class="a" style="left:2450px;top:854px;width:6px;height:6px;border-radius:50%;background:#6a9ff0"></div>
<div class="a" style="left:2461px;top:854px;width:6px;height:6px;border-radius:50%;background:#f59a0a"></div>
<div class="a" style="left:1956px;top:887px;width:60px;text-align:center;font-size:22px;line-height:32px;color:#3d4048">14</div>
<div class="a" style="left:1978px;top:919px;width:6px;height:6px;border-radius:50%;background:#6a9ff0"></div>
<div class="a" style="left:1989px;top:919px;width:6px;height:6px;border-radius:50%;background:#f59a0a"></div>
<div class="a" style="left:2035px;top:887px;width:60px;text-align:center;font-size:22px;line-height:32px;color:#3d4048">15</div>
<div class="a" style="left:2057px;top:919px;width:6px;height:6px;border-radius:50%;background:#6a9ff0"></div>
<div class="a" style="left:2068px;top:919px;width:6px;height:6px;border-radius:50%;background:#f59a0a"></div>
<div class="a" style="left:2113px;top:887px;width:60px;text-align:center;font-size:22px;line-height:32px;color:#3d4048">16</div>
<div class="a" style="left:2135px;top:919px;width:6px;height:6px;border-radius:50%;background:#6a9ff0"></div>
<div class="a" style="left:2146px;top:919px;width:6px;height:6px;border-radius:50%;background:#f59a0a"></div>
<div class="a" style="left:2192px;top:887px;width:60px;text-align:center;font-size:22px;line-height:32px;color:#3d4048">17</div>
<div class="a" style="left:2214px;top:919px;width:6px;height:6px;border-radius:50%;background:#6a9ff0"></div>
<div class="a" style="left:2225px;top:919px;width:6px;height:6px;border-radius:50%;background:#f59a0a"></div>
<div class="a" style="left:2271px;top:887px;width:60px;text-align:center;font-size:22px;line-height:32px;color:#3d4048">18</div>
<div class="a" style="left:2293px;top:919px;width:6px;height:6px;border-radius:50%;background:#6a9ff0"></div>
<div class="a" style="left:2304px;top:919px;width:6px;height:6px;border-radius:50%;background:#f59a0a"></div>
<div class="a" style="left:2349px;top:887px;width:60px;text-align:center;font-size:22px;line-height:32px;color:#3d4048">19</div>
<div class="a" style="left:2371px;top:919px;width:6px;height:6px;border-radius:50%;background:#6a9ff0"></div>
<div class="a" style="left:2382px;top:919px;width:6px;height:6px;border-radius:50%;background:#f59a0a"></div>
<div class="a" style="left:2428px;top:887px;width:60px;text-align:center;font-size:22px;line-height:32px;color:#3d4048">20</div>
<div class="a" style="left:2450px;top:919px;width:6px;height:6px;border-radius:50%;background:#6a9ff0"></div>
<div class="a" style="left:2461px;top:919px;width:6px;height:6px;border-radius:50%;background:#f59a0a"></div>
<div class="a" style="left:1956px;top:953px;width:60px;text-align:center;font-size:22px;line-height:32px;color:#3d4048">21</div>
<div class="a" style="left:1978px;top:985px;width:6px;height:6px;border-radius:50%;background:#6a9ff0"></div>
<div class="a" style="left:1989px;top:985px;width:6px;height:6px;border-radius:50%;background:#f59a0a"></div>
<div class="a" style="left:2035px;top:953px;width:60px;text-align:center;font-size:22px;line-height:32px;color:#3d4048">22</div>
<div class="a" style="left:2057px;top:985px;width:6px;height:6px;border-radius:50%;background:#6a9ff0"></div>
<div class="a" style="left:2068px;top:985px;width:6px;height:6px;border-radius:50%;background:#f59a0a"></div>
<div class="a" style="left:2113px;top:953px;width:60px;text-align:center;font-size:22px;line-height:32px;color:#3d4048">23</div>
<div class="a" style="left:2135px;top:985px;width:6px;height:6px;border-radius:50%;background:#6a9ff0"></div>
<div class="a" style="left:2146px;top:985px;width:6px;height:6px;border-radius:50%;background:#f59a0a"></div>
<div class="a" style="left:2192px;top:953px;width:60px;text-align:center;font-size:22px;line-height:32px;color:#3d4048">24</div>
<div class="a" style="left:2214px;top:985px;width:6px;height:6px;border-radius:50%;background:#6a9ff0"></div>
<div class="a" style="left:2225px;top:985px;width:6px;height:6px;border-radius:50%;background:#f59a0a"></div>
<div class="a" style="left:2271px;top:953px;width:60px;text-align:center;font-size:22px;line-height:32px;color:#3d4048">25</div>
<div class="a" style="left:2293px;top:985px;width:6px;height:6px;border-radius:50%;background:#6a9ff0"></div>
<div class="a" style="left:2304px;top:985px;width:6px;height:6px;border-radius:50%;background:#f59a0a"></div>
<div class="a" style="left:2349px;top:953px;width:60px;text-align:center;font-size:22px;line-height:32px;color:#3d4048">26</div>
<div class="a" style="left:2371px;top:985px;width:6px;height:6px;border-radius:50%;background:#6a9ff0"></div>
<div class="a" style="left:2382px;top:985px;width:6px;height:6px;border-radius:50%;background:#f59a0a"></div>
<div class="a" style="left:2428px;top:953px;width:60px;text-align:center;font-size:22px;line-height:32px;color:#3d4048">27</div>
<div class="a" style="left:2450px;top:985px;width:6px;height:6px;border-radius:50%;background:#6a9ff0"></div>
<div class="a" style="left:2461px;top:985px;width:6px;height:6px;border-radius:50%;background:#f59a0a"></div>
<div class="a" style="left:1956px;top:1019px;width:60px;text-align:center;font-size:22px;line-height:32px;color:#3d4048">28</div>
<div class="a" style="left:1978px;top:1051px;width:6px;height:6px;border-radius:50%;background:#6a9ff0"></div>
<div class="a" style="left:1989px;top:1051px;width:6px;height:6px;border-radius:50%;background:#f59a0a"></div>
<div class="a" style="left:2035px;top:1019px;width:60px;text-align:center;font-size:22px;line-height:32px;color:#3d4048">29</div>
<div class="a" style="left:2057px;top:1051px;width:6px;height:6px;border-radius:50%;background:#6a9ff0"></div>
<div class="a" style="left:2068px;top:1051px;width:6px;height:6px;border-radius:50%;background:#f59a0a"></div>
<div class="a" style="left:2104px;top:1008px;width:79px;height:55px;border-radius:7px;background:#0077cc"></div>
<div class="a" style="left:2113px;top:1019px;width:60px;text-align:center;font-size:22px;line-height:32px;color:#fff">30</div>
<div class="a" style="left:2135px;top:1051px;width:6px;height:6px;border-radius:50%;background:#8fb0f0"></div>
<div class="a" style="left:2146px;top:1051px;width:6px;height:6px;border-radius:50%;background:#f59a0a"></div>
<div class="a" style="left:2192px;top:1019px;width:60px;text-align:center;font-size:22px;line-height:32px;color:#8c8c8c">1</div>
<div class="a" style="left:2214px;top:1051px;width:6px;height:6px;border-radius:50%;background:#6a9ff0"></div>
<div class="a" style="left:2225px;top:1051px;width:6px;height:6px;border-radius:50%;background:#f59a0a"></div>
<div class="a" style="left:2271px;top:1019px;width:60px;text-align:center;font-size:22px;line-height:32px;color:#8c8c8c">2</div>
<div class="a" style="left:2293px;top:1051px;width:6px;height:6px;border-radius:50%;background:#6a9ff0"></div>
<div class="a" style="left:2304px;top:1051px;width:6px;height:6px;border-radius:50%;background:#f59a0a"></div>
<div class="a" style="left:2349px;top:1019px;width:60px;text-align:center;font-size:22px;line-height:32px;color:#8c8c8c">3</div>
<div class="a" style="left:2371px;top:1051px;width:6px;height:6px;border-radius:50%;background:#6a9ff0"></div>
<div class="a" style="left:2382px;top:1051px;width:6px;height:6px;border-radius:50%;background:#f59a0a"></div>
<div class="a" style="left:2428px;top:1019px;width:60px;text-align:center;font-size:22px;line-height:32px;color:#8c8c8c">4</div>
<div class="a" style="left:2450px;top:1051px;width:6px;height:6px;border-radius:50%;background:#6a9ff0"></div>
<div class="a" style="left:2461px;top:1051px;width:6px;height:6px;border-radius:50%;background:#f59a0a"></div>
<div class="a" style="left:1956px;top:1084px;width:60px;text-align:center;font-size:22px;line-height:32px;color:#8c8c8c">5</div>
<div class="a" style="left:1978px;top:1116px;width:6px;height:6px;border-radius:50%;background:#6a9ff0"></div>
<div class="a" style="left:1989px;top:1116px;width:6px;height:6px;border-radius:50%;background:#f59a0a"></div>
<div class="a" style="left:2035px;top:1084px;width:60px;text-align:center;font-size:22px;line-height:32px;color:#8c8c8c">6</div>
<div class="a" style="left:2057px;top:1116px;width:6px;height:6px;border-radius:50%;background:#6a9ff0"></div>
<div class="a" style="left:2068px;top:1116px;width:6px;height:6px;border-radius:50%;background:#f59a0a"></div>
<div class="a" style="left:2113px;top:1084px;width:60px;text-align:center;font-size:22px;line-height:32px;color:#8c8c8c">7</div>
<div class="a" style="left:2135px;top:1116px;width:6px;height:6px;border-radius:50%;background:#6a9ff0"></div>
<div class="a" style="left:2146px;top:1116px;width:6px;height:6px;border-radius:50%;background:#f59a0a"></div>
<div class="a" style="left:2192px;top:1084px;width:60px;text-align:center;font-size:22px;line-height:32px;color:#8c8c8c">8</div>
<div class="a" style="left:2214px;top:1116px;width:6px;height:6px;border-radius:50%;background:#6a9ff0"></div>
<div class="a" style="left:2225px;top:1116px;width:6px;height:6px;border-radius:50%;background:#f59a0a"></div>
<div class="a" style="left:2271px;top:1084px;width:60px;text-align:center;font-size:22px;line-height:32px;color:#8c8c8c">9</div>
<div class="a" style="left:2293px;top:1116px;width:6px;height:6px;border-radius:50%;background:#6a9ff0"></div>
<div class="a" style="left:2304px;top:1116px;width:6px;height:6px;border-radius:50%;background:#f59a0a"></div>
<div class="a" style="left:2349px;top:1084px;width:60px;text-align:center;font-size:22px;line-height:32px;color:#8c8c8c">10</div>
<div class="a" style="left:2371px;top:1116px;width:6px;height:6px;border-radius:50%;background:#6a9ff0"></div>
<div class="a" style="left:2382px;top:1116px;width:6px;height:6px;border-radius:50%;background:#f59a0a"></div>
<div class="a" style="left:2428px;top:1084px;width:60px;text-align:center;font-size:22px;line-height:32px;color:#8c8c8c">11</div>
<div class="a" style="left:2450px;top:1116px;width:6px;height:6px;border-radius:50%;background:#6a9ff0"></div>
<div class="a" style="left:2461px;top:1116px;width:6px;height:6px;border-radius:50%;background:#f59a0a"></div>
<div class="a" style="left:1976px;top:1162px;width:492px;height:2px;background:#e3e3e3"></div>
<svg class="a" style="left:1970px;top:1205px" width="26" height="26" viewBox="0 0 26 26"><path d="M10 3.5 C6.5 2.5 3 5 3.5 9 L7 7 L10 9.5 L9.5 13 L6 14.5 C8.5 17 12.5 16 13.5 13 L21 21.5 C22 22.5 23.5 22.5 24 21.5 C24.8 20.5 24.5 19.5 23.5 18.5 L15.5 11 C16.5 7.5 14 3.5 10 3.5 Z" stroke="#f5a623" stroke-width="2" fill="none" stroke-linejoin="round"/></svg>
<div class="a" style="left:2011px;top:1204px;font-size:21.2px;line-height:29px;color:#1a7ccd;white-space:nowrap;">[活动] 4.3.1 制定智慧城市建设...</div>
<div class="a" style="left:2322px;top:1204px;font-size:21px;line-height:29px;color:#999;white-space:nowrap;">智</div>
<div class="a" style="left:2430px;top:1204px;font-size:21px;line-height:29px;color:#999;white-space:nowrap;">区...</div>
<div class="a" style="left:2340px;top:1205px;width:88px;height:28px;background:linear-gradient(90deg,#eee,#d8d8d8 40%,#f0f0f0 60%,#d9d9d9);opacity:.9"></div>
<svg class="a" style="left:1972px;top:1256px" width="24" height="24" viewBox="0 0 24 24"><path d="M8 2 H2 V22 H22 V2 H16 M10 2 H14" stroke="#7ba7f0" stroke-width="2" fill="none"/><path d="M7 12 L10.5 15.5 L17 8.5" stroke="#7ba7f0" stroke-width="2" fill="none"/></svg>
<div class="a" style="left:2011px;top:1254px;font-size:21.2px;line-height:29px;color:#1a7ccd;white-space:nowrap;">[任务] 7.2.2 系统安全维护</div>
<div class="a" style="left:2322px;top:1254px;font-size:21px;line-height:29px;color:#999;white-space:nowrap;">智</div>
<div class="a" style="left:2400px;top:1254px;font-size:21px;line-height:29px;color:#999;white-space:nowrap;">园区...</div>
<div class="a" style="left:2332px;top:1256px;width:70px;height:28px;background:linear-gradient(90deg,#e6e6e6,#d8d8d8 40%,#f0f0f0 60%,#d9d9d9);opacity:.9"></div>
<svg class="a" style="left:1972px;top:1305px" width="24" height="24" viewBox="0 0 24 24"><path d="M8 2 H2 V22 H22 V2 H16 M10 2 H14" stroke="#7ba7f0" stroke-width="2" fill="none"/><path d="M7 12 L10.5 15.5 L17 8.5" stroke="#7ba7f0" stroke-width="2" fill="none"/></svg>
<div class="a" style="left:2011px;top:1303px;font-size:21.2px;line-height:29px;color:#1a7ccd;white-space:nowrap;">[任务] 5.2.1 制定系统集成测试...</div>
<div class="a" style="left:2322px;top:1303px;width:120px;height:30px;background:linear-gradient(90deg,#eee,#d8d8d8 40%,#f0f0f0 60%,#d9d9d9);opacity:.9"></div>
<div class="a" style="left:2399px;top:1302px;font-size:31px;line-height:40px;font-weight:bold;color:#f00;-webkit-text-stroke:1.6px #f00;font-family:'Liberation Sans',sans-serif;letter-spacing:-0.5px;transform:scaleX(0.82);transform-origin:left">cxy5.com</div>
</body></html>
